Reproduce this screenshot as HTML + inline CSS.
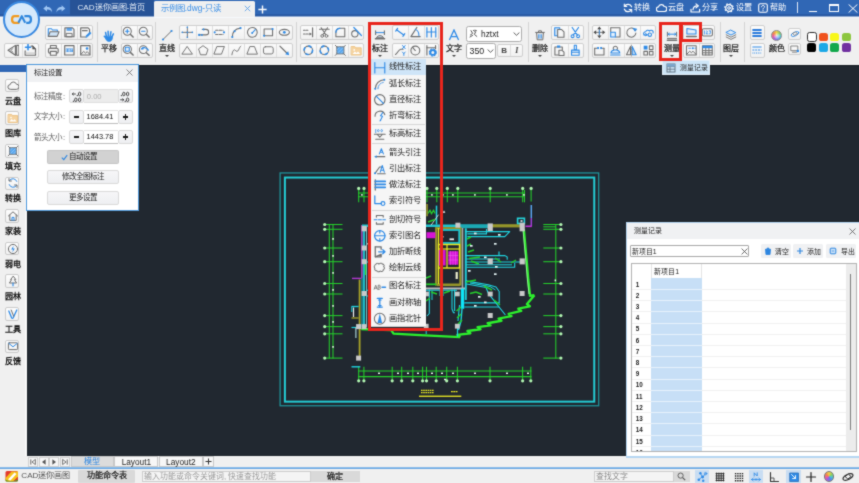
<!DOCTYPE html><html lang="zh-CN"><head><meta charset="utf-8"><title>CAD</title><style>
html,body{margin:0;padding:0}
body{width:859px;height:483px;overflow:hidden;position:relative;background:#212830;font-family:"Liberation Sans",sans-serif;font-size:8px;line-height:10px;color:#2a2a2a}
div{position:absolute;box-sizing:border-box}
svg{display:block}
.t{white-space:nowrap}
.grp{border:1px solid #cfcfcf;border-radius:2px;background:linear-gradient(#fbfbfb,#f1f1f1)}
.dv{background:#dedede;width:1px}
.sep{background:#d4d4d4;width:1px}
.big{font-size:8px;color:#141414;white-space:nowrap;text-align:center;font-weight:500;-webkit-text-stroke:.22px #141414}
.car{width:0;height:0;border-left:2px solid transparent;border-right:2px solid transparent;border-top:2.2px solid #444}
.wt{color:#fff;font-size:8.1px;white-space:nowrap}
.btn{border:1px solid #dadada;border-radius:2px;background:linear-gradient(#f6f6f8,#eeeff2);text-align:center;white-space:nowrap}
.mi{left:0;width:54px;height:16.2px}
.mi .t{left:18.3px;top:3.1px;font-size:8.25px;color:#222}
.sb .t{font-size:8.1px;color:#1a1a1a;width:27px;text-align:center;left:0}
.sbi{border:1px solid #cbcbcb;border-radius:2px;background:linear-gradient(#fdfdfd,#f1f1f1)}
.row{left:0;width:225px;height:11.2px;border-bottom:1px solid #ececec}
.rn{left:2px;top:1px;font-size:6.3px;line-height:9px;color:#1a1a1a;white-space:nowrap;font-weight:bold}
</style></head><body><svg width="0" height="0" style="position:absolute"><filter id="soft" x="0" y="0" width="100%" height="100%" color-interpolation-filters="sRGB"><feConvolveMatrix order="3" kernelMatrix="0.03 0.09 0.03 0.09 0.52 0.09 0.03 0.09 0.03" edgeMode="duplicate"/></filter></svg><div id="w" style="left:0;top:0;width:859px;height:483px;filter:url(#soft)">
<svg width="859" height="483" viewBox="0 0 859 483" style="position:absolute;left:0;top:0" fill="none"><rect x="26.800" y="64.800" width="832.200" height="1" fill="#141a20"/><rect x="280.100" y="172.950" width="318.600" height="232.800" fill="none" stroke="#1f959c" stroke-width="1.250"/><rect x="284.900" y="177.550" width="309.350" height="224.100" fill="none" stroke="#24ccd4" stroke-width="2"/><path d="M358 193L525 193" stroke="#25cf2b" stroke-width="1.05" /><path d="M358 196.8L525 196.8" stroke="#25cf2b" stroke-width="1.05" /><path d="M358.7 188.4L358.7 202.3" stroke="#25cf2b" stroke-width="1.05" /><circle cx="358.7" cy="188.4" r="1.6" fill="#b4f8b4"/><path d="M364 188.4L364 202.3" stroke="#25cf2b" stroke-width="1.05" /><circle cx="364" cy="188.4" r="1.6" fill="#b4f8b4"/><path d="M373.5 188.4L373.5 202.3" stroke="#25cf2b" stroke-width="1.05" /><circle cx="373.5" cy="188.4" r="1.6" fill="#b4f8b4"/><path d="M383 188.4L383 202.3" stroke="#25cf2b" stroke-width="1.05" /><circle cx="383" cy="188.4" r="1.6" fill="#b4f8b4"/><path d="M392.2 188.4L392.2 202.3" stroke="#25cf2b" stroke-width="1.05" /><circle cx="392.2" cy="188.4" r="1.6" fill="#b4f8b4"/><path d="M401.7 188.4L401.7 202.3" stroke="#25cf2b" stroke-width="1.05" /><circle cx="401.7" cy="188.4" r="1.6" fill="#b4f8b4"/><path d="M412.8 188.4L412.8 202.3" stroke="#25cf2b" stroke-width="1.05" /><circle cx="412.8" cy="188.4" r="1.6" fill="#b4f8b4"/><path d="M422.6 188.4L422.6 202.3" stroke="#25cf2b" stroke-width="1.05" /><circle cx="422.6" cy="188.4" r="1.6" fill="#b4f8b4"/><path d="M427 188.4L427 202.3" stroke="#25cf2b" stroke-width="1.05" /><circle cx="427" cy="188.4" r="1.6" fill="#b4f8b4"/><path d="M436.8 188.4L436.8 202.3" stroke="#25cf2b" stroke-width="1.05" /><circle cx="436.8" cy="188.4" r="1.6" fill="#b4f8b4"/><path d="M447.3 188.4L447.3 202.3" stroke="#25cf2b" stroke-width="1.05" /><circle cx="447.3" cy="188.4" r="1.6" fill="#b4f8b4"/><path d="M457.8 188.4L457.8 202.3" stroke="#25cf2b" stroke-width="1.05" /><circle cx="457.8" cy="188.4" r="1.6" fill="#b4f8b4"/><path d="M490.2 188.4L490.2 202.3" stroke="#25cf2b" stroke-width="1.05" /><circle cx="490.2" cy="188.4" r="1.6" fill="#b4f8b4"/><path d="M522.7 188.4L522.7 202.3" stroke="#25cf2b" stroke-width="1.05" /><circle cx="522.7" cy="188.4" r="1.6" fill="#b4f8b4"/><path d="M524.5 190L524.5 202.3" stroke="#25cf2b" stroke-width="1.05" /><path d="M531.1 188.4L531.1 201.5" stroke="#25cf2b" stroke-width="1.05" /><circle cx="531.1" cy="188.4" r="1.6" fill="#b4f8b4"/><rect x="361" y="194.2" width="1.8" height="1.4" fill="#eaffea" /><rect x="372" y="194.2" width="1.8" height="1.4" fill="#eaffea" /><rect x="380" y="194.2" width="1.8" height="1.4" fill="#eaffea" /><rect x="395" y="194.2" width="1.8" height="1.4" fill="#eaffea" /><rect x="408" y="194.2" width="1.8" height="1.4" fill="#eaffea" /><rect x="431" y="194.2" width="1.8" height="1.4" fill="#eaffea" /><rect x="442" y="194.2" width="1.8" height="1.4" fill="#eaffea" /><rect x="452" y="194.2" width="1.8" height="1.4" fill="#eaffea" /><rect x="474" y="194.2" width="1.8" height="1.4" fill="#eaffea" /><rect x="506" y="194.2" width="1.8" height="1.4" fill="#eaffea" /><rect x="523" y="194.2" width="1.8" height="1.4" fill="#eaffea" /><path d="M358 371L531.5 371" stroke="#25cf2b" stroke-width="1.05" /><path d="M358 376.6L531.5 376.6" stroke="#25cf2b" stroke-width="1.05" /><path d="M358.7 366.8L358.7 380.8" stroke="#25cf2b" stroke-width="1.05" /><circle cx="358.7" cy="380.8" r="1.6" fill="#b4f8b4"/><path d="M363.9 366.8L363.9 380.8" stroke="#25cf2b" stroke-width="1.05" /><circle cx="363.9" cy="380.8" r="1.6" fill="#b4f8b4"/><path d="M392.2 366.8L392.2 380.8" stroke="#25cf2b" stroke-width="1.05" /><circle cx="392.2" cy="380.8" r="1.6" fill="#b4f8b4"/><path d="M401.7 366.8L401.7 380.8" stroke="#25cf2b" stroke-width="1.05" /><circle cx="401.7" cy="380.8" r="1.6" fill="#b4f8b4"/><path d="M412.8 366.8L412.8 380.8" stroke="#25cf2b" stroke-width="1.05" /><circle cx="412.8" cy="380.8" r="1.6" fill="#b4f8b4"/><path d="M422.6 366.8L422.6 380.8" stroke="#25cf2b" stroke-width="1.05" /><circle cx="422.6" cy="380.8" r="1.6" fill="#b4f8b4"/><path d="M426.5 366.8L426.5 380.8" stroke="#25cf2b" stroke-width="1.05" /><circle cx="426.5" cy="380.8" r="1.6" fill="#b4f8b4"/><path d="M436.2 366.8L436.2 380.8" stroke="#25cf2b" stroke-width="1.05" /><circle cx="436.2" cy="380.8" r="1.6" fill="#b4f8b4"/><path d="M446.7 366.8L446.7 380.8" stroke="#25cf2b" stroke-width="1.05" /><circle cx="446.7" cy="380.8" r="1.6" fill="#b4f8b4"/><path d="M457.4 366.8L457.4 380.8" stroke="#25cf2b" stroke-width="1.05" /><circle cx="457.4" cy="380.8" r="1.6" fill="#b4f8b4"/><path d="M490 366.8L490 380.8" stroke="#25cf2b" stroke-width="1.05" /><circle cx="490" cy="380.8" r="1.6" fill="#b4f8b4"/><path d="M522.6 366.8L522.6 380.8" stroke="#25cf2b" stroke-width="1.05" /><circle cx="522.6" cy="380.8" r="1.6" fill="#b4f8b4"/><path d="M530.8 366.8L530.8 380.8" stroke="#25cf2b" stroke-width="1.05" /><circle cx="530.8" cy="380.8" r="1.6" fill="#b4f8b4"/><rect x="378" y="372.6" width="2" height="1.4" fill="#eaffea" /><rect x="397" y="372.6" width="2" height="1.4" fill="#eaffea" /><rect x="407" y="372.6" width="2" height="1.4" fill="#eaffea" /><rect x="417" y="372.6" width="2" height="1.4" fill="#eaffea" /><rect x="431" y="372.6" width="2" height="1.4" fill="#eaffea" /><rect x="441" y="372.6" width="2" height="1.4" fill="#eaffea" /><rect x="452" y="372.6" width="2" height="1.4" fill="#eaffea" /><rect x="474" y="372.6" width="2" height="1.4" fill="#eaffea" /><rect x="506" y="372.6" width="2" height="1.4" fill="#eaffea" /><rect x="527" y="372.6" width="2" height="1.4" fill="#eaffea" /><rect x="444" y="378.8" width="2" height="1.4" fill="#eaffea" /><path d="M329.3 224L329.3 358.5" stroke="#25cf2b" stroke-width="1.05" /><path d="M333 224L333 358.5" stroke="#25cf2b" stroke-width="1.05" /><path d="M324.7 224.5L342.5 224.5" stroke="#25cf2b" stroke-width="1.05" /><circle cx="324.7" cy="224.5" r="1.6" fill="#b4f8b4"/><path d="M324.7 229.3L342.5 229.3" stroke="#25cf2b" stroke-width="1.05" /><circle cx="324.7" cy="229.3" r="1.6" fill="#b4f8b4"/><path d="M324.7 248L342.5 248" stroke="#25cf2b" stroke-width="1.05" /><circle cx="324.7" cy="248" r="1.6" fill="#b4f8b4"/><path d="M324.7 261.7L342.5 261.7" stroke="#25cf2b" stroke-width="1.05" /><circle cx="324.7" cy="261.7" r="1.6" fill="#b4f8b4"/><path d="M324.7 283.5L342.5 283.5" stroke="#25cf2b" stroke-width="1.05" /><circle cx="324.7" cy="283.5" r="1.6" fill="#b4f8b4"/><path d="M324.7 294L342.5 294" stroke="#25cf2b" stroke-width="1.05" /><circle cx="324.7" cy="294" r="1.6" fill="#b4f8b4"/><path d="M324.7 315.6L342.5 315.6" stroke="#25cf2b" stroke-width="1.05" /><circle cx="324.7" cy="315.6" r="1.6" fill="#b4f8b4"/><path d="M324.7 326.6L342.5 326.6" stroke="#25cf2b" stroke-width="1.05" /><circle cx="324.7" cy="326.6" r="1.6" fill="#b4f8b4"/><path d="M324.7 333.8L342.5 333.8" stroke="#25cf2b" stroke-width="1.05" /><circle cx="324.7" cy="333.8" r="1.6" fill="#b4f8b4"/><path d="M324.7 358.1L342.5 358.1" stroke="#25cf2b" stroke-width="1.05" /><circle cx="324.7" cy="358.1" r="1.6" fill="#b4f8b4"/><rect x="332.3" y="238" width="1.5" height="1.8" fill="#eaffea" /><rect x="332.3" y="255" width="1.5" height="1.8" fill="#eaffea" /><rect x="332.3" y="272" width="1.5" height="1.8" fill="#eaffea" /><rect x="332.3" y="289" width="1.5" height="1.8" fill="#eaffea" /><rect x="332.3" y="305" width="1.5" height="1.8" fill="#eaffea" /><rect x="332.3" y="321" width="1.5" height="1.8" fill="#eaffea" /><rect x="332.3" y="346" width="1.5" height="1.8" fill="#eaffea" /><path d="M555.8 224L555.8 358.5" stroke="#25cf2b" stroke-width="1.05" /><path d="M543.3 224.5L560.9 224.5" stroke="#25cf2b" stroke-width="1.05" /><circle cx="560.9" cy="224.5" r="1.6" fill="#b4f8b4"/><path d="M543.3 229.3L560.9 229.3" stroke="#25cf2b" stroke-width="1.05" /><circle cx="560.9" cy="229.3" r="1.6" fill="#b4f8b4"/><path d="M543.3 248L560.9 248" stroke="#25cf2b" stroke-width="1.05" /><circle cx="560.9" cy="248" r="1.6" fill="#b4f8b4"/><path d="M543.3 261.7L560.9 261.7" stroke="#25cf2b" stroke-width="1.05" /><circle cx="560.9" cy="261.7" r="1.6" fill="#b4f8b4"/><path d="M543.3 283.5L560.9 283.5" stroke="#25cf2b" stroke-width="1.05" /><circle cx="560.9" cy="283.5" r="1.6" fill="#b4f8b4"/><path d="M543.3 294L560.9 294" stroke="#25cf2b" stroke-width="1.05" /><circle cx="560.9" cy="294" r="1.6" fill="#b4f8b4"/><path d="M543.3 315.6L560.9 315.6" stroke="#25cf2b" stroke-width="1.05" /><circle cx="560.9" cy="315.6" r="1.6" fill="#b4f8b4"/><path d="M543.3 326.6L560.9 326.6" stroke="#25cf2b" stroke-width="1.05" /><circle cx="560.9" cy="326.6" r="1.6" fill="#b4f8b4"/><path d="M543.3 333.8L560.9 333.8" stroke="#25cf2b" stroke-width="1.05" /><circle cx="560.9" cy="333.8" r="1.6" fill="#b4f8b4"/><path d="M543.3 358.1L560.9 358.1" stroke="#25cf2b" stroke-width="1.05" /><circle cx="560.9" cy="358.1" r="1.6" fill="#b4f8b4"/><path d="M543.3 226.8L556 226.8" stroke="#25cf2b" stroke-width="1.05" /><rect x="554.6" y="279.5" width="1.5" height="1.8" fill="#eaffea" /><rect x="419" y="395.6" width="42.3" height="1.3" fill="#ecec22" /><path d="M421 390.400h13M421 392.600h13" stroke="#ecec22" stroke-width="1.200" stroke-dasharray="1.600 .600"/><path d="M451 391.600h7" stroke="#ecec22" stroke-width="1.400" stroke-dasharray="1.800 .500"/><path d="M361.9 225L361.9 278" stroke="#c050d8" stroke-width="1.3" fill="none" stroke-linejoin="round" /><path d="M362 278L362 327" stroke="#1fb8c4" stroke-width="1" fill="none" stroke-linejoin="round" /><path d="M364 230L364 327" stroke="#22b9c4" stroke-width="2.2" /><path d="M366.6 225L366.6 327" stroke="#7fcfd0" stroke-width="1" fill="none" stroke-linejoin="round" /><rect x="367.4" y="243" width="1.6" height="1.6" fill="#f4f4f4" /><path d="M365.5 262L365.5 275" stroke="#25cf2b" stroke-width="1.2" /><path d="M352 278.4L361.4 278.4" stroke="#b038d0" stroke-width="1.4" /><path d="M359.6 279.5L359.6 358.5" stroke="#a8a428" stroke-width="1.8" /><path d="M358.6 306.5L351.5 306.5" stroke="#1fd4e0" stroke-width="1.3" fill="none" stroke-linejoin="round" /><path d="M358.6 318L351.5 318" stroke="#a8a428" stroke-width="1.3" fill="none" stroke-linejoin="round" /><path d="M353.5 307.5L353.5 317" stroke="#f0f0f0" stroke-width="1.2" /><path d="M351.8 306.5L351.8 312" stroke="#1fd4e0" stroke-width="1" /><path d="M351.5 366.8L360.3 366.8" stroke="#1fd4e0" stroke-width="1.4" /><path d="M351.5 327.5L357 327.5" stroke="#1fd4e0" stroke-width="1.2" /><path d="M355.9 327.5L355.9 338" stroke="#bfeff2" stroke-width="1" /><path d="M362 225.8L458 225.8" stroke="#20c4d0" stroke-width="2.6" /><path d="M458 226.2L490 226.2" stroke="#1ba9b4" stroke-width="4" /><path d="M490 225.8L522 225.8" stroke="#97972a" stroke-width="3.2" /><rect x="517.6" y="218.3" width="6.8" height="5.2" fill="none" stroke="#25d3da" stroke-width="1.600"/><rect x="520.5" y="220.2" width="2" height="1.6" fill="#e8ffff" /><path d="M531.3 205L531.3 218" stroke="#5ba6f0" stroke-width="1.5" fill="none" stroke-linejoin="round" /><path d="M531.3 218L531.3 226.3" stroke="#a040d8" stroke-width="1.5" fill="none" stroke-linejoin="round" /><path d="M525.5 226.3L531.8 226.3" stroke="#c030d8" stroke-width="1.6" /><path d="M427.1 204L427.1 216.2" stroke="#97972a" stroke-width="1.6" /><path d="M436.5 205.6L436.5 224.5" stroke="#1fd4e0" stroke-width="1.5" /><path d="M428 213.5L430 210L431.5 214L433.5 210L435 213.5" stroke="#25cf2b" stroke-width="1.2" fill="none" stroke-linejoin="round" /><path d="M431 225.3L438.5 214.7" stroke="#e0e0e0" stroke-width="0.9" fill="none" stroke-linejoin="round" /><path d="M442.600 212.800l1.400-2.400 1.400 2.400z" fill="#f4f4f4"/><path d="M428 222L435 219.5" stroke="#25cf2b" stroke-width="1.4" /><rect x="436.2" y="228.2" width="24.2" height="56.4" fill="none" stroke="#97972a" stroke-width="2.200"/><rect x="441.6" y="230" width="17.6" height="13" fill="none" stroke="#20c4d0" stroke-width="1.800"/><path d="M438.5 228L438.5 284" stroke="#ecec22" stroke-width="1.3" /><rect x="438.5" y="244.5" width="21" height="23.5" fill="none" stroke="#ecec22" stroke-width="1.400"/><path d="M438.5 249L459.5 249" stroke="#ecec22" stroke-width="1.2" /><path d="M447 244.5L447 268" stroke="#ecec22" stroke-width="1.2" /><path d="M438.5 268L438.5 282" stroke="#ecec22" stroke-width="1.2" /><rect x="438.8" y="250" width="6.8" height="15.5" fill="#d614d6" /><rect x="448.4" y="251.2" width="9.8" height="13.5" fill="#d614d6" /><path d="M450.500 251v14M453 251v14M455.500 251v14M448.400 255.500h9.800M448.400 260h9.800" stroke="#f36bf3" stroke-width=".5"/><rect x="426.6" y="232.2" width="8.8" height="6" fill="#d614d6" /><rect x="449.5" y="238.4" width="4.5" height="1.8" fill="#f4f4f4" /><rect x="455.6" y="272" width="2.2" height="7" fill="#f0f0d0" /><rect x="442" y="236" width="1.5" height="1.5" fill="#f4f4f4" /><path d="M462.5 228L462.5 289" stroke="#a8a8a8" stroke-width="1.6" /><path d="M426 288.4L465 288.4" stroke="#bebebe" stroke-width="2" /><path d="M426.2 284.3L436.3 284.3" stroke="#25cf2b" stroke-width="1.8" /><path d="M437 285.5L460 285.5" stroke="#97972a" stroke-width="1.2" /><path d="M465.8 228.3L465.8 300" stroke="#1fc8d4" stroke-width="2" /><path d="M465 231.6L509.7 231.6L504.8 236.6L467.4 236.6" stroke="#1fd4e0" stroke-width="1.1" fill="none" stroke-linejoin="round" /><path d="M467.4 233.9L486.5 233.9L486.5 229" stroke="#1fd4e0" stroke-width="1.1" fill="none" stroke-linejoin="round" /><path d="M465 255.6L505 255.6L507.2 257L507.2 259.8" stroke="#1fd4e0" stroke-width="1.1" fill="none" stroke-linejoin="round" /><path d="M465 262L522.2 262" stroke="#1fd4e0" stroke-width="1.1" fill="none" stroke-linejoin="round" /><path d="M466 259L500 259" stroke="#1fd4e0" stroke-width="1.1" fill="none" stroke-linejoin="round" /><path d="M466.6 267.2L514.7 267.2L514.7 263" stroke="#1fd4e0" stroke-width="1.1" fill="none" stroke-linejoin="round" /><path d="M466 264.8L512 264.8" stroke="#1fd4e0" stroke-width="1" fill="none" stroke-linejoin="round" /><path d="M499 251.5L499 256" stroke="#1fd4e0" stroke-width="1.2" fill="none" stroke-linejoin="round" /><path d="M465.8 280.9L488.3 284.8L496 287L499.2 291.5L499.2 303.4" stroke="#1fd4e0" stroke-width="1.1" fill="none" stroke-linejoin="round" /><path d="M466.5 284L486 287.5L488.3 293.3L505.4 315" stroke="#1fd4e0" stroke-width="1.1" fill="none" stroke-linejoin="round" /><path d="M470 283L490 286.5L495.5 290" stroke="#1fd4e0" stroke-width="1" fill="none" stroke-linejoin="round" /><path d="M464.3 302.9L499.2 302.9" stroke="#1fd4e0" stroke-width="1.1" fill="none" stroke-linejoin="round" /><path d="M464.3 307L499.2 307" stroke="#1fd4e0" stroke-width="1.1" fill="none" stroke-linejoin="round" /><path d="M462.5 288.6L462.5 308.8" stroke="#0fe4f8" stroke-width="3.4" /><path d="M462 308.8L461 321L458.5 330" stroke="#1fd4e0" stroke-width="1.4" fill="none" stroke-linejoin="round" /><path d="M459.5 305L458 321" stroke="#1fd4e0" stroke-width="1.1" fill="none" stroke-linejoin="round" /><path d="M366.5 290.2L457 290.2" stroke="#1fd4e0" stroke-width="1.1" fill="none" stroke-linejoin="round" /><path d="M429.3 289.4L429.3 313.5L427 316" stroke="#1fd4e0" stroke-width="1.1" fill="none" stroke-linejoin="round" /><path d="M432 291L432 300" stroke="#1fd4e0" stroke-width="1" fill="none" stroke-linejoin="round" /><path d="M452 289.4L452 309L453.5 312.7L455 312.7" stroke="#1fd4e0" stroke-width="1.1" fill="none" stroke-linejoin="round" /><path d="M454.6 289.4L454.6 311" stroke="#1fd4e0" stroke-width="1.1" fill="none" stroke-linejoin="round" /><path d="M440 291L440 296L443 296L443 291" stroke="#1fd4e0" stroke-width="1" fill="none" stroke-linejoin="round" /><path d="M366.5 296L370 296L370 312" stroke="#1fd4e0" stroke-width="1.1" fill="none" stroke-linejoin="round" /><path d="M366 262L372 262" stroke="#1fd4e0" stroke-width="1.1" fill="none" stroke-linejoin="round" /><path d="M467 239L471 237" stroke="#25cf2b" stroke-width="1.4" /><path d="M467 246L471 244" stroke="#25cf2b" stroke-width="1.4" /><path d="M468 252L474 250" stroke="#25cf2b" stroke-width="1.4" /><path d="M469 258.5L480 257" stroke="#25cf2b" stroke-width="1.4" /><path d="M471 261L479 264" stroke="#25cf2b" stroke-width="1.4" /><path d="M466 282L476 280" stroke="#25cf2b" stroke-width="1.4" /><path d="M495 258L501 262" stroke="#25cf2b" stroke-width="1.4" /><path d="M511 263L516 260" stroke="#25cf2b" stroke-width="1.4" /><path d="M426 278L431 276" stroke="#25cf2b" stroke-width="1.4" /><path d="M426 301L430 298" stroke="#25cf2b" stroke-width="1.4" /><path d="M470 293.5L476 292" stroke="#25cf2b" stroke-width="1.4" /><path d="M476 292L482 294.5" stroke="#25cf2b" stroke-width="1.4" /><path d="M484 286L492 290" stroke="#25cf2b" stroke-width="1.4" /><path d="M494 300L500 305" stroke="#25cf2b" stroke-width="1.4" /><path d="M456.5 311L461 307" stroke="#25cf2b" stroke-width="1.4" /><path d="M457 318L461 314" stroke="#25cf2b" stroke-width="1.4" /><path d="M458 324L462 320" stroke="#25cf2b" stroke-width="1.4" /><path d="M431 292L437 294" stroke="#25cf2b" stroke-width="1.4" /><path d="M444 293L450 291" stroke="#25cf2b" stroke-width="1.4" /><rect x="494" y="243" width="2.6" height="1.7" fill="#e6f6f6" /><rect x="494" y="273.3" width="2.6" height="1.7" fill="#e6f6f6" /><rect x="474" y="232.6" width="2.6" height="1.7" fill="#e6f6f6" /><rect x="470" y="245" width="2.6" height="1.7" fill="#e6f6f6" /><rect x="484" y="256.5" width="2.6" height="1.7" fill="#e6f6f6" /><rect x="495" y="266" width="2.6" height="1.7" fill="#e6f6f6" /><rect x="478" y="296" width="2.6" height="1.7" fill="#e6f6f6" /><rect x="474" y="305" width="2.6" height="1.7" fill="#e6f6f6" /><rect x="484" y="301.5" width="2.6" height="1.7" fill="#e6f6f6" /><rect x="498" y="234" width="2.6" height="1.7" fill="#e6f6f6" /><rect x="468" y="270" width="2.6" height="1.7" fill="#e6f6f6" /><path d="M523.8 229.1L526.6 260L528.3 280L530 295.8L534.4 295.2" stroke="#2df02d" stroke-width="2.4" fill="none" stroke-linejoin="round" /><path d="M523 230L525.7 260L527.4 280L529 294" stroke="#b8ffb8" stroke-width="0.7" fill="none" stroke-linejoin="round" /><path d="M534.4 295.2L527.0 304.1L529.8 306.3L518.4 308.7L521.2 310.9L508.7 313.9L511.5 316.1L498.6 318.6L501.4 320.8L487.7 323.2L490.5 325.4L477.6 327.1L480.4 329.3L467.5 331.0L470.3 333.2L457.4 334.9L460.2 337.1" stroke="#2df02d" stroke-width="2.4" fill="none" stroke-linejoin="round" stroke-linejoin="miter"/><path d="M460.2 337.1L440 336.2L420 335.2L393.5 333.6L391.2 330.2L375 329.6L361.3 329" stroke="#2df02d" stroke-width="2.3" fill="none" stroke-linejoin="round" /><path d="M457.5 326.6L457.5 336.5" stroke="#1fd4e0" stroke-width="1.2" /><path d="M426.2 328L426.2 334" stroke="#1fd4e0" stroke-width="1" /><rect x="361.7" y="225.9" width="5" height="5.4" fill="#c9c9c9" /><rect x="455.4" y="222.7" width="5" height="5" fill="#c9c9c9" /><rect x="487.6" y="223.4" width="5.2" height="7.6" fill="#c9c9c9" /><rect x="519.6" y="222.7" width="5.2" height="8.6" fill="#c9c9c9" /><rect x="361.7" y="245.5" width="5" height="5" fill="#c9c9c9" /><rect x="487.6" y="258.4" width="5.2" height="6" fill="#c9c9c9" /><rect x="519.6" y="258.4" width="5.2" height="6" fill="#c9c9c9" /><rect x="361.7" y="259.2" width="5" height="5" fill="#c9c9c9" /><rect x="361.6" y="291.0" width="5" height="5" fill="#c9c9c9" /><rect x="424.1" y="291.7" width="4.8" height="4.6" fill="#c9c9c9" /><rect x="454.9" y="291.7" width="4.8" height="4.6" fill="#c9c9c9" /><rect x="487.7" y="291.6" width="5" height="4.8" fill="#c9c9c9" /><rect x="519.6" y="291.0" width="5" height="5" fill="#c9c9c9" /><rect x="487.7" y="313.0" width="5" height="5" fill="#c9c9c9" /><rect x="356.1" y="324.1" width="5" height="5" fill="#c9c9c9" /><rect x="361.6" y="324.1" width="5" height="5" fill="#c9c9c9" /><rect x="423.8" y="323.8" width="4.8" height="4.8" fill="#c9c9c9" /><rect x="454.9" y="323.8" width="4.8" height="4.8" fill="#c9c9c9" /><rect x="356.1" y="355.6" width="5" height="5" fill="#c9c9c9" /></svg>
<div style="left:0px;top:0px;width:867px;height:16.2px;background:linear-gradient(#3067b5 0,#3067b5 13.600px,#2a5ca8 14.400px,#27579f 16.200px)"></div>
<div style="left:70px;top:0px;width:84px;height:16px;background:#275397"></div>
<div style="left:0px;top:16px;width:867px;height:1px;background:#8fa9d0"></div>
<div style="left:0px;top:17px;width:867px;height:1px;background:#f6f8fb"></div>
<div class="t" style="left:77.5px;top:3px;font-size:8.1px;color:#e4ecf7">CAD迷你画图-首页</div>
<div style="left:154px;top:0.6px;width:100.5px;height:16.6px;background:#f0f0f0;border-radius:1.5px 1.5px 0 0"></div>
<div class="t" style="left:160.8px;top:3px;font-size:8.3px;color:#3a8ee6">示例图.dwg-只读</div>
<div style="left:243.5px;top:4.6px;width:7px;height:7px"><svg width="7" height="7" viewBox="0 0 7 7"><path d="M.8.8l5.400 5.400M6.200.8L.8 6.200" stroke="#5a9fe8" stroke-width=".9"/></svg></div>
<div style="left:258px;top:4.800px;width:9px;height:9px"><svg width="9" height="9" viewBox="0 0 9 9"><path d="M4.500.4v8.200M.4 4.500h8.200" stroke="#fff" stroke-width="1.400"/></svg></div>
<div style="left:43px;top:5.2px;width:23px;height:8px"><svg width="23" height="8" viewBox="0 0 23 8"><path d="M4 .2L.3 3.400 4 6.600V4.600c2.600-.2 4.200.6 5 2.800C9.200 4 7.400 2 4 2z" fill="#9ec5f3"/><path d="M18.600.2l3.700 3.200-3.700 3.200V4.600c-2.600-.2-4.200.6-5 2.800C13.400 4 15.200 2 18.600 2z" fill="#9ec5f3"/></svg></div>
<div style="left:623.3px;top:3.2px;width:10px;height:10px"><svg width="10" height="10" viewBox="0 0 10 10" fill="none" stroke="#fff" stroke-width="1" stroke-linecap="round" stroke-linejoin="round"><path d="M8.600 3.800A3.900 3.900 0 001.600 3.300M1.400 6.200A3.900 3.900 0 008.400 6.700" stroke-width="1.250"/><path d="M1.300 1v2.500h2.500M8.700 9V6.500H6.200" stroke-width="1.100"/></svg></div>
<div class="wt" style="left:634px;top:3px;">转换</div>
<div style="left:656.3px;top:3.2px;width:11px;height:10px"><svg width="11" height="10" viewBox="0 0 11 10" fill="none" stroke="#fff" stroke-width="1" stroke-linecap="round" stroke-linejoin="round"><path d="M2.800 8.500A2.300 2.300 0 012.500 3.900 3 3 0 018.200 3.500 2.500 2.500 0 018.500 8.500z" stroke-width="1.200"/></svg></div>
<div class="wt" style="left:668px;top:3px;">云盘</div>
<div style="left:690.3px;top:3.2px;width:11px;height:10px"><svg width="11" height="10" viewBox="0 0 11 10" fill="none" stroke="#fff" stroke-width="1" stroke-linecap="round" stroke-linejoin="round"><path d="M1 6.400v2.600h8.600V6.400" stroke-width="1.200"/><path d="M3 6.600c.3-2.400 1.900-3.700 4.200-3.700" stroke-width="1.200"/><path d="M6 .9l2.400 2-2.400 2" stroke-width="1.200"/></svg></div>
<div class="wt" style="left:702px;top:3px;">分享</div>
<div style="left:724.3px;top:3.2px;width:10px;height:10px"><svg width="10" height="10" viewBox="0 0 10 10" fill="none" stroke="#fff" stroke-width="1" stroke-linecap="round" stroke-linejoin="round"><circle cx="5" cy="5" r="3.300" stroke-width="1.200"/><circle cx="5" cy="5" r="4.200" stroke-width="1.300" stroke-dasharray="1.500 1.800" stroke-linecap="butt"/><circle cx="5" cy="5" r="1.300" stroke-width="1"/></svg></div>
<div class="wt" style="left:735.8px;top:3px;">设置</div>
<div style="left:758.2px;top:3.2px;width:10px;height:10px"><svg width="10" height="10" viewBox="0 0 10 10" fill="none" stroke="#fff" stroke-width="1" stroke-linecap="round" stroke-linejoin="round"><rect x=".7" y=".7" width="8.600" height="8.600" rx="1.600" stroke-width="1.100"/><path d="M3.500 3.800c0-1.900 3-1.900 3 0 0 1.100-1.500 1-1.500 2.300M5 7.500v.3" stroke-width="1"/></svg></div>
<div class="wt" style="left:769.5px;top:3px;">帮助</div>
<div style="left:796.7px;top:2px;width:1px;height:11.4px;background:#dfe8f5"></div>
<div style="left:808.5px;top:10.6px;width:8.5px;height:1px;background:#fff"></div>
<div style="left:828.5px;top:4px;width:10px;height:7.8px;border:1px solid #fff;border-top:2px solid #fff"></div>
<div style="left:848px;top:3.800px;width:10px;height:9px"><svg width="10" height="9" viewBox="0 0 10 9"><path d="M.6.400l8.800 8.200M9.400.400L.6 8.600" stroke="#fff" stroke-width="1"/></svg></div>
<div style="left:0px;top:18px;width:867px;height:46.8px;background:#f0f0f0"></div>
<div style="left:2.500px;top:.800px;width:37px;height:37px;border-radius:50%;background:#d6e9fb;border:2.300px solid #3888e0"></div>
<div style="left:9.700px;top:13.900px;width:23px;height:11px"><svg width="23" height="11" viewBox="0 0 23 11" fill="none" stroke-linecap="butt" stroke-linejoin="round"><path d="M9.200 2.200H4.600c-3.400 0-3.400 6.600 0 6.600h4.800" stroke="#f19a1f" stroke-width="2.300"/><path d="M8.400 8.800L11.800 2.200 15.200 8.800" stroke="#2f86dc" stroke-width="2.100"/><path d="M14.400 2.200h4c3.400 0 3.400 6.600 0 6.600h-2.200" stroke="#2f86dc" stroke-width="2.300"/></svg></div>
<div class="grp" style="left:4.4px;top:43.3px;width:34.6px;height:14.3px;"></div>
<div class="ic" style="left:6.7px;top:44.1px;width:12.7px;height:12.7px"><svg width="12.7" height="12.7" viewBox="0 0 12 12" fill="none" stroke-linecap="round" stroke-linejoin="round" ><path d="M8 1.300L1 6l7 4.700z" stroke="#6e6e6e" stroke-width="1.100"/><path d="M5.600 4.400L3.400 6l2.200 1.600" stroke="#6e6e6e" stroke-width=".7"/><rect x="9.100" y="1.300" width="2.100" height="9.400" stroke="#6e6e6e" stroke-width="1"/></svg></div>
<div class="dv" style="left:21.700000000000003px;top:44.3px;width:1px;height:12.3px;"></div>
<div class="ic" style="left:24.0px;top:44.1px;width:12.7px;height:12.7px"><svg width="12.7" height="12.7" viewBox="0 0 12 12" fill="none" stroke-linecap="round" stroke-linejoin="round" ><path d="M1.100 6.400v4.200h9.800V4.800L8.200 2H6.600" stroke="#6e6e6e" stroke-width="1.100"/><path d="M8.200 2v2.800h2.700z" fill="#555" stroke="#555" stroke-width=".5"/><path d="M1.100 8.600h9.800" stroke="#b5b5b5" stroke-width=".8"/><path d="M3.800 .6v4.800M1.400 3h4.800" stroke="#2e8ae6" stroke-width="1.500"/></svg></div>
<div class="grp" style="left:45.3px;top:25.4px;width:48px;height:14.3px;"></div>
<div class="ic" style="left:46.95px;top:26.2px;width:12.7px;height:12.7px"><svg width="12.7" height="12.7" viewBox="0 0 12 12" fill="none" stroke-linecap="round" stroke-linejoin="round" ><path d="M1.2 9.5V2.6h3l1 1.2h4.6v1.4" stroke="#2e8ae6" stroke-width="1"/><path d="M1.2 9.8l1.8-4.4h8.4l-1.8 4.4z" stroke="#6e6e6e" stroke-width="1" fill="#cfe4f8"/></svg></div>
<div class="dv" style="left:61.3px;top:26.4px;width:1px;height:12.3px;"></div>
<div class="ic" style="left:62.95px;top:26.2px;width:12.7px;height:12.7px"><svg width="12.7" height="12.7" viewBox="0 0 12 12" fill="none" stroke-linecap="round" stroke-linejoin="round" ><path d="M1.8 1.8h7.2l1.4 1.4v7h-8.6z" stroke="#6e6e6e" stroke-width="1.1"/><rect x="3.4" y="1.8" width="5" height="2.8" fill="#2e8ae6" opacity=".75"/><rect x="3.4" y="7" width="5.2" height="3.2" stroke="#6e6e6e" stroke-width=".9"/></svg></div>
<div class="dv" style="left:77.3px;top:26.4px;width:1px;height:12.3px;"></div>
<div class="ic" style="left:78.95px;top:26.2px;width:12.7px;height:12.7px"><svg width="12.7" height="12.7" viewBox="0 0 12 12" fill="none" stroke-linecap="round" stroke-linejoin="round" ><path d="M10 6V3.2L8.6 1.8H1.6v8.6h5" stroke="#6e6e6e" stroke-width="1.1"/><path d="M3.2 4.4h4.6" stroke="#6e6e6e" stroke-width="1"/><path d="M6.6 10.6l.5-1.8 3.2-3.2 1.2 1.2-3.2 3.2z" fill="#2e8ae6" stroke="#2e8ae6" stroke-width=".5"/></svg></div>
<div class="grp" style="left:45.3px;top:43.3px;width:48px;height:14.3px;"></div>
<div class="ic" style="left:46.95px;top:44.1px;width:12.7px;height:12.7px"><svg width="12.7" height="12.7" viewBox="0 0 12 12" fill="none" stroke-linecap="round" stroke-linejoin="round" ><rect x="3.2" y="1.4" width="5.6" height="2.6" stroke="#6e6e6e" stroke-width="1"/><rect x="1.4" y="4" width="9.2" height="4.6" rx="1.3" stroke="#6e6e6e" stroke-width="1.1"/><rect x="3.2" y="7" width="5.6" height="3.6" stroke="#6e6e6e" stroke-width="1" fill="#f4f4f4"/></svg></div>
<div class="dv" style="left:61.3px;top:44.3px;width:1px;height:12.3px;"></div>
<div class="ic" style="left:62.95px;top:44.1px;width:12.7px;height:12.7px"><svg width="12.7" height="12.7" viewBox="0 0 12 12" fill="none" stroke-linecap="round" stroke-linejoin="round" ><rect x="1.6" y="1.6" width="8.8" height="8.8" stroke="#6e6e6e" stroke-width="1.1"/><rect x="2.6" y="4.2" width="6.8" height="3.4" fill="#2e8ae6" opacity=".85"/><path d="M3.4 7v-2M5.4 7v-2h.8v2M7.6 7v-2h1" stroke="#fff" stroke-width=".5"/></svg></div>
<div class="dv" style="left:77.3px;top:44.3px;width:1px;height:12.3px;"></div>
<div class="ic" style="left:78.95px;top:44.1px;width:12.7px;height:12.7px"><svg width="12.7" height="12.7" viewBox="0 0 12 12" fill="none" stroke-linecap="round" stroke-linejoin="round" ><rect x="1.6" y="1.6" width="8.8" height="8.8" stroke="#6e6e6e" stroke-width="1.1"/><circle cx="7.6" cy="4.2" r="1.2" fill="#2e8ae6"/><path d="M2 9.6l2.4-2.6 1.8 1.6 1.6-1.4L10 9.6" stroke="#6e6e6e" stroke-width=".9"/></svg></div>
<div class="sep" style="left:96.8px;top:21.5px;width:1px;height:40px;"></div>
<div class="ic" style="left:103px;top:29.6px;width:12px;height:12px"><svg width="12" height="12" viewBox="0 0 12 12" fill="none" stroke-linecap="round" stroke-linejoin="round" ><path d="M3.300 6.200L2.600 2.600M5.300 5.600L5.100 1.300M7.300 5.800L7.900 1.800M8.900 6.800L10.400 3.800M3.400 8.600L1.300 6.200" stroke="#2e8ae6" stroke-width="1.500"/><path d="M2.800 6.200l6.600.2c.4 2.800-.8 5-3.200 5-2 0-3-1.200-3.600-3z" fill="#2e8ae6" stroke="#2e8ae6" stroke-width=".8"/></svg></div>
<div class="big" style="left:95px;top:43.600px;width:28px;">平移</div>
<div class="grp" style="left:120.6px;top:25.4px;width:32px;height:14.3px;"></div>
<div class="ic" style="left:122.25px;top:26.2px;width:12.7px;height:12.7px"><svg width="12.7" height="12.7" viewBox="0 0 12 12" fill="none" stroke-linecap="round" stroke-linejoin="round" ><circle cx="5" cy="5" r="3.800" stroke="#6e6e6e" stroke-width=".95"/><path d="M7.800 7.800l2.700 2.700" stroke="#6e6e6e" stroke-width="1.400"/><path d="M5 3.400v3.200M3.400 5h3.200" stroke="#2e8ae6" stroke-width="1.100"/></svg></div>
<div class="dv" style="left:136.6px;top:26.4px;width:1px;height:12.3px;"></div>
<div class="ic" style="left:138.25px;top:26.2px;width:12.7px;height:12.7px"><svg width="12.7" height="12.7" viewBox="0 0 12 12" fill="none" stroke-linecap="round" stroke-linejoin="round" ><circle cx="5" cy="5" r="3.800" stroke="#6e6e6e" stroke-width=".95"/><path d="M7.800 7.800l2.700 2.700" stroke="#6e6e6e" stroke-width="1.400"/><path d="M3.400 5h3.200" stroke="#2e8ae6" stroke-width="1.100"/></svg></div>
<div class="grp" style="left:120.6px;top:43.3px;width:32px;height:14.3px;"></div>
<div class="ic" style="left:122.25px;top:44.1px;width:12.7px;height:12.7px"><svg width="12.7" height="12.7" viewBox="0 0 12 12" fill="none" stroke-linecap="round" stroke-linejoin="round" ><circle cx="5" cy="5" r="3.900" stroke="#6e6e6e" stroke-width=".95"/><path d="M7.900 7.900l2.600 2.600" stroke="#6e6e6e" stroke-width="1.400"/><rect x="3.100" y="3.100" width="3.800" height="3.800" rx=".6" stroke="#2e8ae6" stroke-width="1" fill="#e2effb"/></svg></div>
<div class="dv" style="left:136.6px;top:44.3px;width:1px;height:12.3px;"></div>
<div class="ic" style="left:138.25px;top:44.1px;width:12.7px;height:12.7px"><svg width="12.7" height="12.7" viewBox="0 0 12 12" fill="none" stroke-linecap="round" stroke-linejoin="round" ><circle cx="5" cy="5.400" r="3.700" stroke="#6e6e6e" stroke-width=".95"/><path d="M7.800 8.200l2.700 2.500" stroke="#6e6e6e" stroke-width="1.400"/><path d="M3.400 4.400c2-1.600 4.600-1.200 6.400 1.400" stroke="#2e8ae6" stroke-width="1.100"/><path d="M5.200 2.600v2.600H2.600z" fill="#2e8ae6"/></svg></div>
<div class="sep" style="left:155.3px;top:21.5px;width:1px;height:40px;"></div>
<div class="ic" style="left:161.3px;top:29.2px;width:12px;height:12px"><svg width="12" height="12" viewBox="0 0 12 12" fill="none" stroke-linecap="round" stroke-linejoin="round" ><path d="M2 10.500L10.500 2" stroke="#6e6e6e" stroke-width="1"/><circle cx="2" cy="10.500" r="1.100" fill="#2e8ae6"/><circle cx="10.500" cy="2" r="1.100" fill="#2e8ae6"/></svg></div>
<div class="big" style="left:153.3px;top:43.600px;width:28px;">直线</div>
<div class="car" style="left:165.3px;top:54.8px;width:4px;height:3px;"></div>
<div class="grp" style="left:179.4px;top:25.4px;width:113.19000000000001px;height:14.3px;"></div>
<div class="ic" style="left:181.14px;top:26.2px;width:12.7px;height:12.7px"><svg width="12.7" height="12.7" viewBox="0 0 12 12" fill="none" stroke-linecap="round" stroke-linejoin="round" ><path d="M6 1v10M1 6h10" stroke="#6e6e6e" stroke-width=".9"/><circle cx="6" cy="1.300" r=".75" fill="#2e8ae6"/><circle cx="6" cy="10.700" r=".75" fill="#2e8ae6"/><circle cx="1.300" cy="6" r=".75" fill="#2e8ae6"/><circle cx="10.700" cy="6" r=".75" fill="#2e8ae6"/><circle cx="6" cy="6" r=".8" fill="#2e8ae6"/></svg></div>
<div class="dv" style="left:195.57px;top:26.4px;width:1px;height:12.3px;"></div>
<div class="ic" style="left:197.31px;top:26.2px;width:12.7px;height:12.7px"><svg width="12.7" height="12.7" viewBox="0 0 12 12" fill="none" stroke-linecap="round" stroke-linejoin="round" ><path d="M5 3.200h3.400a2.600 2.600 0 010 5.200H2" stroke="#6e6e6e" stroke-width="1"/><path d="M6.800 1.800l-2 1.400 2 1.400z" fill="#2e8ae6"/><circle cx="2" cy="8.400" r="1" fill="#2e8ae6"/><circle cx="4.600" cy="8.400" r=".9" fill="#2e8ae6"/></svg></div>
<div class="dv" style="left:211.74px;top:26.4px;width:1px;height:12.3px;"></div>
<div class="ic" style="left:213.48px;top:26.2px;width:12.7px;height:12.7px"><svg width="12.7" height="12.7" viewBox="0 0 12 12" fill="none" stroke-linecap="round" stroke-linejoin="round" ><path d="M2.500 4h7M2.500 8h7" stroke="#6e6e6e" stroke-width="1" stroke-dasharray="2.200 1.200"/><circle cx="1.600" cy="6" r="1" fill="#2e8ae6"/><circle cx="10.400" cy="6" r="1" fill="#2e8ae6"/></svg></div>
<div class="dv" style="left:227.91000000000003px;top:26.4px;width:1px;height:12.3px;"></div>
<div class="ic" style="left:229.65px;top:26.2px;width:12.7px;height:12.7px"><svg width="12.7" height="12.7" viewBox="0 0 12 12" fill="none" stroke-linecap="round" stroke-linejoin="round" ><path d="M2.200 10.500C2.200 6 5 2.600 10 2" stroke="#6e6e6e" stroke-width="1.1"/><circle cx="2.200" cy="10.400" r="1" fill="#2e8ae6"/><circle cx="10" cy="2" r="1" fill="#2e8ae6"/><circle cx="4.400" cy="5" r="1" fill="#2e8ae6"/></svg></div>
<div class="dv" style="left:244.08px;top:26.4px;width:1px;height:12.3px;"></div>
<div class="ic" style="left:245.82px;top:26.2px;width:12.7px;height:12.7px"><svg width="12.7" height="12.7" viewBox="0 0 12 12" fill="none" stroke-linecap="round" stroke-linejoin="round" ><circle cx="6" cy="6" r="4.600" stroke="#6e6e6e" stroke-width="1"/><path d="M6 6.400l2.800-3" stroke="#2e8ae6" stroke-width="1"/><circle cx="5.800" cy="6.600" r=".9" fill="#2e8ae6"/></svg></div>
<div class="dv" style="left:260.25px;top:26.4px;width:1px;height:12.3px;"></div>
<div class="ic" style="left:261.99px;top:26.2px;width:12.7px;height:12.7px"><svg width="12.7" height="12.7" viewBox="0 0 12 12" fill="none" stroke-linecap="round" stroke-linejoin="round" ><rect x="2" y="2.800" width="8" height="6.400" stroke="#6e6e6e" stroke-width="1"/><circle cx="2" cy="9.200" r="1" fill="#2e8ae6"/><circle cx="10" cy="2.800" r="1" fill="#2e8ae6"/></svg></div>
<div class="dv" style="left:276.42px;top:26.4px;width:1px;height:12.3px;"></div>
<div class="ic" style="left:278.16px;top:26.2px;width:12.7px;height:12.7px"><svg width="12.7" height="12.7" viewBox="0 0 12 12" fill="none" stroke-linecap="round" stroke-linejoin="round" ><ellipse cx="6" cy="6" rx="4.800" ry="2.800" stroke="#6e6e6e" stroke-width="1"/><circle cx="6" cy="6" r="1.300" fill="#2e8ae6"/></svg></div>
<div class="grp" style="left:179.4px;top:43.3px;width:113.19000000000001px;height:14.3px;"></div>
<div class="ic" style="left:181.14px;top:44.1px;width:12.7px;height:12.7px"><svg width="12.7" height="12.7" viewBox="0 0 12 12" fill="none" stroke-linecap="round" stroke-linejoin="round" ><path d="M6 2.600L10.800 9.600H1.200z" stroke="#6e6e6e" stroke-width=".88"/></svg></div>
<div class="dv" style="left:195.57px;top:44.3px;width:1px;height:12.3px;"></div>
<div class="ic" style="left:197.31px;top:44.1px;width:12.7px;height:12.7px"><svg width="12.7" height="12.7" viewBox="0 0 12 12" fill="none" stroke-linecap="round" stroke-linejoin="round" ><path d="M6 1.800l4.400 3.200-1.700 5.200H3.300L1.600 5z" stroke="#6e6e6e" stroke-width=".88"/></svg></div>
<div class="dv" style="left:211.74px;top:44.3px;width:1px;height:12.3px;"></div>
<div class="ic" style="left:213.48px;top:44.1px;width:12.7px;height:12.7px"><svg width="12.7" height="12.7" viewBox="0 0 12 12" fill="none" stroke-linecap="round" stroke-linejoin="round" ><path d="M4 2.400h6.800L8 9.600H1.200z" stroke="#6e6e6e" stroke-width=".88"/></svg></div>
<div class="dv" style="left:227.91000000000003px;top:44.3px;width:1px;height:12.3px;"></div>
<div class="ic" style="left:229.65px;top:44.1px;width:12.7px;height:12.7px"><svg width="12.7" height="12.7" viewBox="0 0 12 12" fill="none" stroke-linecap="round" stroke-linejoin="round" ><path d="M1.800 10.200c.5-3.600 1.900-5.600 3.100-4.300 1.300 1.400 2.300 1.500 3.200-.3.700-1.400 1.100-2.800 2.100-3.600" stroke="#6e6e6e" stroke-width=".88"/></svg></div>
<div class="dv" style="left:244.08px;top:44.3px;width:1px;height:12.3px;"></div>
<div class="ic" style="left:245.82px;top:44.1px;width:12.7px;height:12.7px"><svg width="12.7" height="12.7" viewBox="0 0 12 12" fill="none" stroke-linecap="round" stroke-linejoin="round" ><path d="M4 2.400h4L10.800 9.600H1.200z" stroke="#6e6e6e" stroke-width=".88"/></svg></div>
<div class="dv" style="left:260.25px;top:44.3px;width:1px;height:12.3px;"></div>
<div class="ic" style="left:261.99px;top:44.1px;width:12.7px;height:12.7px"><svg width="12.7" height="12.7" viewBox="0 0 12 12" fill="none" stroke-linecap="round" stroke-linejoin="round" ><rect x="1.400" y="2.600" width="9.200" height="6.800" rx="1.800" stroke="#6e6e6e" stroke-width=".88"/></svg></div>
<div class="dv" style="left:276.42px;top:44.3px;width:1px;height:12.3px;"></div>
<div class="ic" style="left:278.16px;top:44.1px;width:12.7px;height:12.7px"><svg width="12.7" height="12.7" viewBox="0 0 12 12" fill="none" stroke-linecap="round" stroke-linejoin="round" ><path d="M1.800 2l7 7" stroke="#6e6e6e" stroke-width="1.100"/><path d="M10.600 10.600L6.800 9.600l2.800-2.800z" fill="#2e8ae6"/></svg></div>
<div class="sep" style="left:296.3px;top:21.5px;width:1px;height:40px;"></div>
<div class="grp" style="left:300.1px;top:25.4px;width:64.4px;height:14.3px;"></div>
<div class="ic" style="left:301.8px;top:26.2px;width:12.7px;height:12.7px"><svg width="12.7" height="12.7" viewBox="0 0 12 12" fill="none" stroke-linecap="round" stroke-linejoin="round" ><path d="M1.400 4h5M1.400 7.600h6.600" stroke="#6e6e6e" stroke-width="1" stroke-dasharray="1.600 1"/><path d="M10 1.800v8.400" stroke="#6e6e6e" stroke-width="1.100"/><path d="M9.400 7.600L7.200 6.200v2.800z" fill="#6e6e6e"/></svg></div>
<div class="dv" style="left:316.20000000000005px;top:26.4px;width:1px;height:12.3px;"></div>
<div class="ic" style="left:317.9px;top:26.2px;width:12.7px;height:12.7px"><svg width="12.7" height="12.7" viewBox="0 0 12 12" fill="none" stroke-linecap="round" stroke-linejoin="round" ><path d="M3 1.600l4.400 6.600M9 1.600L4.600 8.200M1.400 3h9.200" stroke="#6e6e6e" stroke-width="1"/><circle cx="4" cy="9.400" r="1.300" stroke="#6e6e6e" stroke-width=".9"/><circle cx="8" cy="9.400" r="1.300" stroke="#6e6e6e" stroke-width=".9"/></svg></div>
<div class="dv" style="left:332.3px;top:26.4px;width:1px;height:12.3px;"></div>
<div class="ic" style="left:334.0px;top:26.2px;width:12.7px;height:12.7px"><svg width="12.7" height="12.7" viewBox="0 0 12 12" fill="none" stroke-linecap="round" stroke-linejoin="round" ><path d="M10.200 2.200v8H1.800V6c0-2.200 1.600-3.800 3.800-3.800z" stroke="#6e6e6e" stroke-width="1"/><path d="M1.800 6c0-2.200 1.600-3.800 3.800-3.800" stroke="#2e8ae6" stroke-width="1.200"/></svg></div>
<div class="dv" style="left:348.40000000000003px;top:26.4px;width:1px;height:12.3px;"></div>
<div class="ic" style="left:350.1px;top:26.2px;width:12.7px;height:12.7px"><svg width="12.7" height="12.7" viewBox="0 0 12 12" fill="none" stroke-linecap="round" stroke-linejoin="round" ><circle cx="4.600" cy="7.400" r="3" stroke="#6e6e6e" stroke-width="1"/><path d="M3.600 1.400l7.200 7.600" stroke="#2e8ae6" stroke-width="1.100"/></svg></div>
<div class="grp" style="left:300.1px;top:43.3px;width:64.4px;height:14.3px;"></div>
<div class="ic" style="left:301.8px;top:44.1px;width:12.7px;height:12.7px"><svg width="12.7" height="12.7" viewBox="0 0 12 12" fill="none" stroke-linecap="round" stroke-linejoin="round" ><circle cx="6" cy="6" r="4" stroke="#6e6e6e" stroke-width="1"/><circle cx="6" cy="6" r="4" stroke="#2e8ae6" stroke-width="1.500" stroke-dasharray="2.200 4.083"/></svg></div>
<div class="dv" style="left:316.20000000000005px;top:44.3px;width:1px;height:12.3px;"></div>
<div class="ic" style="left:317.9px;top:44.1px;width:12.7px;height:12.7px"><svg width="12.7" height="12.7" viewBox="0 0 12 12" fill="none" stroke-linecap="round" stroke-linejoin="round" ><circle cx="6" cy="6" r="4" stroke="#6e6e6e" stroke-width="1"/><circle cx="6" cy="6" r="4" stroke="#2e8ae6" stroke-width="1.500" stroke-dasharray="2.200 4.083" stroke-dashoffset="3.100"/></svg></div>
<div class="dv" style="left:332.3px;top:44.3px;width:1px;height:12.3px;"></div>
<div class="ic" style="left:334.0px;top:44.1px;width:12.7px;height:12.7px"><svg width="12.7" height="12.7" viewBox="0 0 12 12" fill="none" stroke-linecap="round" stroke-linejoin="round" ><rect x="2.600" y="2.600" width="6.800" height="6.800" fill="#5aa8f0"/><path d="M2.600 6l3.400-3.400M2.600 9.400l6.800-6.800M6 9.400l3.400-3.400" stroke="#9ccbf6" stroke-width=".7"/><path d="M1.200 1.200l1.600 1.600M10.800 1.200l-1.600 1.600M1.200 10.800l1.600-1.600M10.800 10.800l-1.600-1.600" stroke="#6e6e6e" stroke-width=".9"/><path d="M2.600 2.600h6.800v6.800H2.600z" stroke="#6e6e6e" stroke-width=".8" stroke-dasharray="1.500 .8"/></svg></div>
<div class="dv" style="left:348.40000000000003px;top:44.3px;width:1px;height:12.3px;"></div>
<div class="ic" style="left:350.1px;top:44.1px;width:12.7px;height:12.7px"><svg width="12.7" height="12.7" viewBox="0 0 12 12" fill="none" stroke-linecap="round" stroke-linejoin="round" ><path d="M1.400 2.400h3.200l1 1.200h5v6.800H1.400z" fill="#f5d3a0" stroke="#ecc07e" stroke-width=".8"/><path d="M2.400 9.400l2.200-2.400 1.600 1.400 1.400-1.200 2 2.200z" fill="#fff"/><circle cx="4" cy="5.600" r=".8" fill="#fff"/></svg></div>
<div class="ic" style="left:374px;top:29.2px;width:12px;height:12px"><svg width="12" height="12" viewBox="0 0 12 12" fill="none" stroke-linecap="round" stroke-linejoin="round" ><path d="M1.600 1.800v3.600M10.400 1.800v3.600" stroke="#6e6e6e" stroke-width="1.100"/><path d="M2.200 3.600h7.600" stroke="#2e8ae6" stroke-width="1"/><path d="M2.600 8.400c1-2.400 5.800-2.400 6.800 0z" stroke="#6e6e6e" stroke-width="1" fill="#cfe4f8"/><path d="M1.400 9.800h9.200" stroke="#6e6e6e" stroke-width="1.400"/></svg></div>
<div class="big" style="left:366px;top:43.600px;width:28px;">标注</div>
<div class="car" style="left:378px;top:54.8px;width:4px;height:3px;"></div>
<div class="grp" style="left:392.4px;top:25.4px;width:46.8px;height:14.3px;"></div>
<div class="ic" style="left:393.85px;top:26.2px;width:12.7px;height:12.7px"><svg width="12.7" height="12.7" viewBox="0 0 12 12" fill="none" stroke-linecap="round" stroke-linejoin="round" ><path d="M2.400 3.600l6.800 5" stroke="#2e8ae6" stroke-width="1.100"/><path d="M1.600 4.800l1.800-2.600M8.400 9.800l1.800-2.600" stroke="#2e8ae6" stroke-width="1.100"/></svg></div>
<div class="dv" style="left:408.0px;top:26.4px;width:1px;height:12.3px;"></div>
<div class="ic" style="left:409.45px;top:26.2px;width:12.7px;height:12.7px"><svg width="12.7" height="12.7" viewBox="0 0 12 12" fill="none" stroke-linecap="round" stroke-linejoin="round" ><path d="M7.400 1.400L1.800 10h8.800" stroke="#6e6e6e" stroke-width="1.100"/><path d="M6 3.200c2 .8 3.400 3 3.400 5.800" stroke="#2e8ae6" stroke-width="1"/></svg></div>
<div class="dv" style="left:423.59999999999997px;top:26.4px;width:1px;height:12.3px;"></div>
<div class="ic" style="left:425.05px;top:26.2px;width:12.7px;height:12.7px"><svg width="12.7" height="12.7" viewBox="0 0 12 12" fill="none" stroke-linecap="round" stroke-linejoin="round" ><path d="M1.800 1.600v8.800M6 1.600v8.800M10.200 1.600v8.800" stroke="#2e8ae6" stroke-width="1.100"/><path d="M1.800 5.600h8.400" stroke="#2e8ae6" stroke-width="1"/></svg></div>
<div class="grp" style="left:392.4px;top:43.3px;width:46.8px;height:14.3px;"></div>
<div class="ic" style="left:393.85px;top:44.1px;width:12.7px;height:12.7px"><svg width="12.7" height="12.7" viewBox="0 0 12 12" fill="none" stroke-linecap="round" stroke-linejoin="round" ><path d="M1.400 10c2-1 2.600-4.600 5-5h2.200" stroke="#6e6e6e" stroke-width="1"/><path d="M8 1.400l2.600 3M10.600 1.400L8 4.400M8 7.600l1.300 1.500 1.300-1.500M9.300 9.100v1.700" stroke="#2e8ae6" stroke-width=".9"/></svg></div>
<div class="dv" style="left:408.0px;top:44.3px;width:1px;height:12.3px;"></div>
<div class="ic" style="left:409.45px;top:44.1px;width:12.7px;height:12.7px"><svg width="12.7" height="12.7" viewBox="0 0 12 12" fill="none" stroke-linecap="round" stroke-linejoin="round" ><circle cx="6" cy="6.200" r="4.200" stroke="#6e6e6e" stroke-width="1"/><path d="M6 6.200L3.400 3.200" stroke="#6e6e6e" stroke-width="1"/><path d="M2.800 2.500l1.600.4-1.100 1z" fill="#6e6e6e"/></svg></div>
<div class="dv" style="left:423.59999999999997px;top:44.3px;width:1px;height:12.3px;"></div>
<div class="ic" style="left:425.05px;top:44.1px;width:12.7px;height:12.7px"><svg width="12.7" height="12.7" viewBox="0 0 12 12" fill="none" stroke-linecap="round" stroke-linejoin="round" ><path d="M1.800 1.600v8.800M10 1.600v3" stroke="#6e6e6e" stroke-width="1.100"/><path d="M1.800 3.600h8" stroke="#6e6e6e" stroke-width="1"/><circle cx="7.400" cy="8" r="2.300" stroke="#2e8ae6" stroke-width="1.700"/><circle cx="7.400" cy="8" r="3.300" stroke="#2e8ae6" stroke-width="1" stroke-dasharray="1.200 1.400"/></svg></div>
<div class="ic" style="left:447.6px;top:29.2px;width:12px;height:12px"><svg width="12" height="12" viewBox="0 0 12 12" fill="none" stroke-linecap="round" stroke-linejoin="round" ><path d="M1.400 11L6 1l4.600 10M3 7.600h6" stroke="#2e8ae6" stroke-width="1.300" stroke-linecap="butt" stroke-linejoin="miter"/></svg></div>
<div class="big" style="left:439.6px;top:43.600px;width:28px;">文字</div>
<div class="car" style="left:451.6px;top:54.8px;width:4px;height:3px;"></div>
<div style="left:466.2px;top:26.1px;width:56.2px;height:15.7px;background:#fff;border:1px solid #adadad;border-radius:2.500px"></div>
<div style="left:469px;top:29px;width:9px;height:9px"><svg width="9" height="9" viewBox="0 0 9 9" fill="none" stroke="#444" stroke-width=".9" stroke-linecap="round"><path d="M2 1.600l1.600 2.800L1.400 6M4.400 1.400l2.200 1.400-1.200 2.600 2.400 2M1 8l2.600-1.600M6 1.200l1.400.4"/></svg></div>
<div class="t" style="left:481px;top:28.6px;font-size:8.400px;color:#222">hztxt</div>
<div style="left:512.500px;top:32px;width:7px;height:4px"><svg width="7" height="4" viewBox="0 0 7 4"><path d="M.600.500L3.500 3.300 6.400.500" stroke="#4a4a4a" stroke-width=".9" fill="none"/></svg></div>
<div style="left:466.2px;top:43.1px;width:29.8px;height:16px;background:#fff;border:1px solid #adadad;border-radius:2.500px"></div>
<div class="t" style="left:469.5px;top:46px;font-size:8.800px;color:#222">350</div>
<div style="left:487px;top:49.200px;width:7px;height:4px"><svg width="7" height="4" viewBox="0 0 7 4"><path d="M.600.500L3.500 3.300 6.400.500" stroke="#4a4a4a" stroke-width=".9" fill="none"/></svg></div>
<div class="grp" style="left:497.4px;top:43.8px;width:25.8px;height:13.2px;"></div>
<div class="dv" style="left:510.3px;top:44.8px;width:1px;height:11.2px;"></div>
<div class="t" style="left:501.3px;top:45.6px;font-size:8px;font-weight:bold;color:#444">B</div>
<div class="t" style="left:515.3px;top:45.6px;font-size:8px;font-weight:bold;font-style:italic;color:#444;font-family:'Liberation Serif',serif">I</div>
<div class="sep" style="left:527.6px;top:21.5px;width:1px;height:40px;"></div>
<div class="ic" style="left:534px;top:29.2px;width:12px;height:12px"><svg width="12" height="12" viewBox="0 0 12 12" fill="none" stroke-linecap="round" stroke-linejoin="round" ><path d="M2.600 4l.6 6.800h5.600L9.400 4z" stroke="#6e6e6e" stroke-width="1"/><path d="M1.600 3.400h8.800M4.600 3.200V1.800h2.800v1.400" stroke="#6e6e6e" stroke-width="1"/><path d="M4.600 5.600v3.600M6 5.600v3.600M7.400 5.600v3.600" stroke="#2e8ae6" stroke-width=".8"/></svg></div>
<div class="big" style="left:526px;top:43.600px;width:28px;">删除</div>
<div class="car" style="left:538px;top:54.8px;width:4px;height:3px;"></div>
<div class="grp" style="left:551.4px;top:25.4px;width:32.2px;height:14.3px;"></div>
<div class="ic" style="left:553.1px;top:26.2px;width:12.7px;height:12.7px"><svg width="12.7" height="12.7" viewBox="0 0 12 12" fill="none" stroke-linecap="round" stroke-linejoin="round" ><path d="M1.600 1.600h4.800v7.600H1.600z" stroke="#2e8ae6" stroke-width="1" fill="#cfe4f8"/><path d="M4.400 3.400h3.800l2.200 2.200v5H4.400z" stroke="#6e6e6e" stroke-width="1" fill="#f6f6f6"/></svg></div>
<div class="dv" style="left:567.5px;top:26.4px;width:1px;height:12.3px;"></div>
<div class="ic" style="left:569.2px;top:26.2px;width:12.7px;height:12.7px"><svg width="12.7" height="12.7" viewBox="0 0 12 12" fill="none" stroke-linecap="round" stroke-linejoin="round" ><path d="M3 1.400l5 7.200M9 1.400L4 8.600" stroke="#2e8ae6" stroke-width="1.100"/><circle cx="3.400" cy="9.600" r="1.400" stroke="#2e8ae6" stroke-width="1"/><circle cx="8.600" cy="9.600" r="1.400" stroke="#2e8ae6" stroke-width="1"/></svg></div>
<div class="grp" style="left:551.4px;top:43.3px;width:32.2px;height:14.3px;"></div>
<div class="ic" style="left:553.1px;top:44.1px;width:12.7px;height:12.7px"><svg width="12.7" height="12.7" viewBox="0 0 12 12" fill="none" stroke-linecap="round" stroke-linejoin="round" ><path d="M5 10.400H1.800V2.800h7v2.400" stroke="#6e6e6e" stroke-width="1"/><rect x="3.800" y="1.400" width="3" height="2" fill="#2e8ae6"/><path d="M5.600 6h3l1.800 1.800v3H5.600z" stroke="#6e6e6e" stroke-width="1" fill="#f6f6f6"/></svg></div>
<div class="dv" style="left:567.5px;top:44.3px;width:1px;height:12.3px;"></div>
<div class="ic" style="left:569.2px;top:44.1px;width:12.7px;height:12.7px"><svg width="12.7" height="12.7" viewBox="0 0 12 12" fill="none" stroke-linecap="round" stroke-linejoin="round" ><rect x="5" y="1.200" width="2" height="4.200" stroke="#2e8ae6" stroke-width="1"/><path d="M2.400 5.800h7.200v2H2.400z" stroke="#2e8ae6" stroke-width="1" fill="#e6f1fc"/><path d="M2.400 7.800v2.800h7.200V7.800" stroke="#2e8ae6" stroke-width="1"/></svg></div>
<div class="sep" style="left:588px;top:21.5px;width:1px;height:40px;"></div>
<div class="grp" style="left:591.5px;top:25.4px;width:64.48px;height:14.3px;"></div>
<div class="ic" style="left:593.21px;top:26.2px;width:12.7px;height:12.7px"><svg width="12.7" height="12.7" viewBox="0 0 12 12" fill="none" stroke-linecap="round" stroke-linejoin="round" ><path d="M6 2v8M2 6h8" stroke="#6e6e6e" stroke-width=".9"/><path d="M6 4v4" stroke="#2e8ae6" stroke-width=".8"/><path d="M6 .4L4 3h4zM6 11.600L4 9h4zM.4 6L3 4v4zM11.600 6L9 4v4z" fill="#4a4a4a"/></svg></div>
<div class="dv" style="left:607.62px;top:26.4px;width:1px;height:12.3px;"></div>
<div class="ic" style="left:609.33px;top:26.2px;width:12.7px;height:12.7px"><svg width="12.7" height="12.7" viewBox="0 0 12 12" fill="none" stroke-linecap="round" stroke-linejoin="round" ><path d="M2 1.600h8.400v8.800H6.400" stroke="#6e6e6e" stroke-width="1"/><path d="M1.600 1.600v3.800" stroke="#6e6e6e" stroke-width="1"/><rect x="1.600" y="6" width="4.400" height="4.400" stroke="#2e8ae6" stroke-width="1" fill="#e6f1fc"/></svg></div>
<div class="dv" style="left:623.74px;top:26.4px;width:1px;height:12.3px;"></div>
<div class="ic" style="left:625.45px;top:26.2px;width:12.7px;height:12.7px"><svg width="12.7" height="12.7" viewBox="0 0 12 12" fill="none" stroke-linecap="round" stroke-linejoin="round" ><path d="M9.800 4.200A4.300 4.300 0 1010.300 6.600" stroke="#6e6e6e" stroke-width="1"/><path d="M10.900 2.800L7.600 2.200l1.800 2.600z" fill="#2e8ae6" stroke="#2e8ae6" stroke-width=".6"/></svg></div>
<div class="dv" style="left:639.86px;top:26.4px;width:1px;height:12.3px;"></div>
<div class="ic" style="left:641.57px;top:26.2px;width:12.7px;height:12.7px"><svg width="12.7" height="12.7" viewBox="0 0 12 12" fill="none" stroke-linecap="round" stroke-linejoin="round" ><path d="M2 8.600c-1.200-1.600 0-3.400 1.600-3.200.4-1.600 2.600-1.800 3.400-.6 1.600-1.800 4.200-.2 3.400 1.800M2 8.600h3" stroke="#2e8ae6" stroke-width="1"/><circle cx="7.400" cy="8.200" r="1.600" stroke="#2e8ae6" stroke-width="1"/><circle cx="3.600" cy="8.200" r="1" stroke="#2e8ae6" stroke-width=".9"/></svg></div>
<div class="grp" style="left:591.5px;top:43.3px;width:64.48px;height:14.3px;"></div>
<div class="ic" style="left:593.21px;top:44.1px;width:12.7px;height:12.7px"><svg width="12.7" height="12.7" viewBox="0 0 12 12" fill="none" stroke-linecap="round" stroke-linejoin="round" ><path d="M1.600 4v6.400h8.800V4" stroke="#6e6e6e" stroke-width="1"/><path d="M1.600 4h2.200M8.200 4h2.200" stroke="#6e6e6e" stroke-width="1"/><rect x="4" y="2.800" width="1.600" height="2" fill="#2e8ae6"/><rect x="6.800" y="2.800" width="1.600" height="2" fill="#2e8ae6"/></svg></div>
<div class="dv" style="left:607.62px;top:44.3px;width:1px;height:12.3px;"></div>
<div class="ic" style="left:609.33px;top:44.1px;width:12.7px;height:12.7px"><svg width="12.7" height="12.7" viewBox="0 0 12 12" fill="none" stroke-linecap="round" stroke-linejoin="round" ><path d="M4.600 5.600c-1.200-1.200-.6-3.400 1.400-3.400s2.600 2.200 1.400 3.400" stroke="#6e6e6e" stroke-width="1"/><path d="M1.800 8.600c0-1.600 1.400-2.600 3-3h2.400c1.600.4 3 1.400 3 3z" stroke="#2e8ae6" stroke-width="1" fill="#e6f1fc"/><path d="M1.600 10.400h8.800" stroke="#2e8ae6" stroke-width="1.100"/></svg></div>
<div class="dv" style="left:623.74px;top:44.3px;width:1px;height:12.3px;"></div>
<div class="ic" style="left:625.45px;top:44.1px;width:12.7px;height:12.7px"><svg width="12.7" height="12.7" viewBox="0 0 12 12" fill="none" stroke-linecap="round" stroke-linejoin="round" ><path d="M5.200 2.400v7.800H1.400z" stroke="#6e6e6e" stroke-width="1"/><path d="M6.800 2.400v7.800h3.800z" stroke="#2e8ae6" stroke-width="1" fill="#2e8ae6" fill-opacity=".28"/><path d="M6 1v10.400" stroke="#6e6e6e" stroke-width=".7" stroke-dasharray="1 1"/></svg></div>
<div class="dv" style="left:639.86px;top:44.3px;width:1px;height:12.3px;"></div>
<div class="ic" style="left:641.57px;top:44.1px;width:12.7px;height:12.7px"><svg width="12.7" height="12.7" viewBox="0 0 12 12" fill="none" stroke-linecap="round" stroke-linejoin="round" ><rect x="1.600" y="1.600" width="3.600" height="3.600" fill="#2e8ae6"/><rect x="7" y="1.800" width="3.400" height="3.400" stroke="#6e6e6e" stroke-width="1"/><rect x="1.800" y="7" width="3.400" height="3.400" stroke="#6e6e6e" stroke-width="1"/><rect x="7" y="7" width="3.400" height="3.400" stroke="#6e6e6e" stroke-width="1"/></svg></div>
<div class="ic" style="left:665.5px;top:29.5px;width:12px;height:12px"><svg width="12" height="12" viewBox="0 0 12 12" fill="none" stroke-linecap="round" stroke-linejoin="round" ><path d="M1.400 2.200v4M10.600 2.200v4" stroke="#6e6e6e" stroke-width="1"/><path d="M2 4.200h8" stroke="#2e8ae6" stroke-width="1"/><path d="M3.400 3.200L2 4.200l1.400 1M8.600 3.200l1.400 1-1.400 1" stroke="#2e8ae6" stroke-width=".8"/><path d="M1.400 8.400h9.200" stroke="#6e6e6e" stroke-width="1"/><path d="M1.400 10.200h9.200" stroke="#6e6e6e" stroke-width="1.600"/></svg></div>
<div class="big" style="left:657.5px;top:43.600px;width:28px;">测量</div>
<div class="car" style="left:669.5px;top:54.8px;width:4px;height:3px;"></div>
<div class="grp" style="left:683.2px;top:25.4px;width:31.8px;height:14.3px;"></div>
<div class="ic" style="left:684.8px;top:26.2px;width:12.7px;height:12.7px"><svg width="12.7" height="12.7" viewBox="0 0 12 12" fill="none" stroke-linecap="round" stroke-linejoin="round" ><path d="M1.800 2.400l8.600 1.400v3.800H1.800z" stroke="#2e8ae6" stroke-width="1" fill="#e3effb"/><path d="M1.600 10h9" stroke="#6e6e6e" stroke-width="1.500"/></svg></div>
<div class="dv" style="left:699.1px;top:26.4px;width:1px;height:12.3px;"></div>
<div class="ic" style="left:700.7px;top:26.2px;width:12.7px;height:12.7px"><svg width="12.7" height="12.7" viewBox="0 0 12 12" fill="none" stroke-linecap="round" stroke-linejoin="round" ><rect x="1.200" y="2.600" width="9.600" height="6.800" rx="1.400" stroke="#6e6e6e" stroke-width="1"/><path d="M3.200 7.600V4.600M4.800 5c.6-.8 1.800-.2 1 .8l-1 1.600h1.600M7.800 4.600h1.400l-.8 1.200c1.200 0 1.200 1.800-.6 1.600" stroke="#2e8ae6" stroke-width=".8"/></svg></div>
<div class="grp" style="left:683.2px;top:43.3px;width:31.8px;height:14.3px;"></div>
<div class="ic" style="left:684.8px;top:44.1px;width:12.7px;height:12.7px"><svg width="12.7" height="12.7" viewBox="0 0 12 12" fill="none" stroke-linecap="round" stroke-linejoin="round" ><rect x="1.400" y="1.600" width="9.200" height="8.800" stroke="#6e6e6e" stroke-width="1"/><circle cx="7.400" cy="4" r="1" fill="#2e8ae6"/><path d="M5.400 4h-2M9.400 4h.6" stroke="#2e8ae6" stroke-width=".8"/><path d="M1.800 9.600l2.600-2.800L6 8.200l1.600-1.400 2.600 2.800" stroke="#6e6e6e" stroke-width=".9"/></svg></div>
<div class="dv" style="left:699.1px;top:44.3px;width:1px;height:12.3px;"></div>
<div class="ic" style="left:700.7px;top:44.1px;width:12.7px;height:12.7px"><svg width="12.7" height="12.7" viewBox="0 0 12 12" fill="none" stroke-linecap="round" stroke-linejoin="round" ><rect x="1.400" y="1.600" width="9.200" height="8.800" stroke="#6e6e6e" stroke-width="1"/><rect x="1.400" y="1.600" width="9.200" height="2.400" fill="#2e8ae6"/><path d="M1.400 6.200h9.200M1.400 8.300h9.200M4.500 4v6.400M7.500 4v6.400" stroke="#6e6e6e" stroke-width=".9"/></svg></div>
<div class="sep" style="left:719.7px;top:21.5px;width:1px;height:40px;"></div>
<div class="ic" style="left:725.2px;top:29.3px;width:12px;height:12px"><svg width="12" height="12" viewBox="0 0 12 12" fill="none" stroke-linecap="round" stroke-linejoin="round" ><path d="M6 1.200l4.800 2.400L6 6 1.200 3.600z" stroke="#2e8ae6" stroke-width=".95" fill="#dcebfa"/><path d="M1.200 5.800L6 8.200l4.800-2.400M1.200 8L6 10.400 10.800 8" stroke="#6e6e6e" stroke-width=".9"/></svg></div>
<div class="big" style="left:717.2px;top:43.600px;width:28px;">图层</div>
<div class="car" style="left:729.2px;top:54.8px;width:4px;height:3px;"></div>
<div class="sep" style="left:743.7px;top:21.5px;width:1px;height:40px;"></div>
<div class="grp" style="left:749.5px;top:25.2px;width:15.2px;height:14.6px;"></div>
<div class="ic" style="left:751.1px;top:26.5px;width:12px;height:12px"><svg width="12" height="12" viewBox="0 0 12 12" fill="none" stroke-linecap="round" stroke-linejoin="round" ><path d="M1.400 3h9.200M1.400 6h9.200M1.400 9h9.200" stroke="#2c7cdc" stroke-width="1.800" stroke-linecap="butt"/></svg></div>
<div class="grp" style="left:749.5px;top:43px;width:15.2px;height:14.6px;"></div>
<div class="ic" style="left:751.1px;top:44.3px;width:12px;height:12px"><svg width="12" height="12" viewBox="0 0 12 12" fill="none" stroke-linecap="round" stroke-linejoin="round" ><path d="M1.400 3h9.200" stroke="#2e8ae6" stroke-width="1" stroke-linecap="butt"/><path d="M1.400 6h9.200" stroke="#2e8ae6" stroke-width="1" stroke-dasharray="2 .8" stroke-linecap="butt"/><path d="M1.400 9h9.200" stroke="#2e8ae6" stroke-width="1" stroke-dasharray="1 .8" stroke-linecap="butt"/></svg></div>
<div style="left:771px;top:30.200px;width:11px;height:11px;border-radius:50%;background:conic-gradient(#f2d04a,#8fd05a,#49c2d8,#5a86e8,#a35fe0,#ee5f9f,#f2894a,#f2d04a);border:.600px solid #8a8a8a"></div>
<div style="left:773.500px;top:32.700px;width:6px;height:6px;border-radius:50%;background:radial-gradient(rgba(255,255,255,.75),rgba(255,255,255,0))"></div>
<div class="big" style="left:762.500px;top:43.600px;width:28px">颜色</div>
<div class="grp" style="left:788.3px;top:28.2px;width:12.4px;height:11.6px;"></div>
<div class="ic" style="left:789.5px;top:29px;width:10px;height:10px"><svg width="10" height="10" viewBox="0 0 12 12" fill="none" stroke-linecap="round" stroke-linejoin="round" ><ellipse cx="6" cy="6" rx="5" ry="2.200" transform="rotate(-25 6 6)" stroke="#2e8ae6" stroke-width="1"/><path d="M3.400 5.200l3-1.600 2.600 1.800-3 2z" stroke="#6e6e6e" stroke-width=".9" fill="#f4f4f4"/></svg></div>
<div class="grp" style="left:788.3px;top:43px;width:12.4px;height:11.6px;"></div>
<div class="ic" style="left:789.5px;top:43.8px;width:10px;height:10px"><svg width="10" height="10" viewBox="0 0 12 12" fill="none" stroke-linecap="round" stroke-linejoin="round" ><rect x="1.400" y="2.400" width="8" height="5.600" stroke="#6e6e6e" stroke-width="1"/><path d="M3 9.800h4.800" stroke="#6e6e6e" stroke-width="1"/><circle cx="9.400" cy="8.400" r="1.500" fill="#2e8ae6"/></svg></div>
<div style="left:806.6999999999999px;top:32.0px;width:9.9px;height:9.7px;background:#ffffff;border-radius:2.600px;border:1.200px solid #2a2a2a;"></div>
<div style="left:818.8499999999999px;top:32.6px;width:8.7px;height:8.5px;background:#f0511c;border-radius:2.600px;"></div>
<div style="left:830.4px;top:32.6px;width:8.7px;height:8.5px;background:#f8f71a;border-radius:2.600px;"></div>
<div style="left:841.9499999999999px;top:32.6px;width:8.7px;height:8.5px;background:#8cc63e;border-radius:2.600px;"></div>
<div style="left:807.3px;top:43.4px;width:8.7px;height:8.5px;background:#000000;border-radius:2.600px;"></div>
<div style="left:818.8499999999999px;top:43.4px;width:8.7px;height:8.5px;background:#1ca8e6;border-radius:2.600px;"></div>
<div style="left:830.4px;top:43.4px;width:8.7px;height:8.5px;background:#12a84c;border-radius:2.600px;"></div>
<div style="left:841.9499999999999px;top:43.4px;width:8.7px;height:8.5px;background:#7030a0;border-radius:2.600px;"></div>
<div class="sb" style="left:0px;top:63.8px;width:26.8px;height:404px;background:#f0f0f0"></div>
<div style="left:24.6px;top:63.8px;width:2.2px;height:392px;background:#f8f8f8"></div>
<div style="left:0px;top:65px;width:26.4px;height:7px;background:#3067b5"></div>
<div class="sbi" style="left:5.2px;top:78.8px;width:14.2px;height:13.6px;"></div>
<div class="ic" style="left:6.500px;top:79.50px;width:12px;height:12px"><svg width="12" height="12" viewBox="0 0 12 12" fill="none" stroke-linecap="round" stroke-linejoin="round" ><path d="M3.400 9.400A2.400 2.400 0 013.200 4.600 3.200 3.200 0 019.400 4.200 2.600 2.600 0 019.600 9.400z" stroke="#6e6e6e" stroke-width="1"/></svg></div>
<div class="t" style="left:0;top:96.60px;width:25px;text-align:center;font-size:8.100px;color:#111;font-weight:700">云盘</div>
<div class="sbi" style="left:5.2px;top:111.4px;width:14.2px;height:13.6px;"></div>
<div class="ic" style="left:6.500px;top:112.10px;width:12px;height:12px"><svg width="12" height="12" viewBox="0 0 12 12" fill="none" stroke-linecap="round" stroke-linejoin="round" ><path d="M1.400 2.400h3.200l1 1.200h5v6.800H1.400z" fill="#f5d3a0" stroke="#e8b974" stroke-width=".8"/><path d="M2.400 9.400l2.200-2.400 1.600 1.400 1.400-1.200 2 2.200z" fill="#fff"/><circle cx="4" cy="5.600" r=".8" fill="#fff"/></svg></div>
<div class="t" style="left:0;top:129.20px;width:25px;text-align:center;font-size:8.100px;color:#111;font-weight:700">图库</div>
<div class="sbi" style="left:5.2px;top:144.0px;width:14.2px;height:13.6px;"></div>
<div class="ic" style="left:6.500px;top:144.70px;width:12px;height:12px"><svg width="12" height="12" viewBox="0 0 12 12" fill="none" stroke-linecap="round" stroke-linejoin="round" ><rect x="2.600" y="2.600" width="6.800" height="6.800" fill="#5aa8f0"/><path d="M2.600 6l3.400-3.400M2.600 9.400l6.800-6.800M6 9.400l3.400-3.400" stroke="#9ccbf6" stroke-width=".7"/><path d="M1.200 1.200l1.600 1.600M10.800 1.200l-1.600 1.600M1.200 10.800l1.600-1.600M10.800 10.800l-1.600-1.600" stroke="#6e6e6e" stroke-width=".9"/><path d="M2.600 2.600h6.800v6.800H2.600z" stroke="#6e6e6e" stroke-width=".8" stroke-dasharray="1.500 .8"/></svg></div>
<div class="t" style="left:0;top:161.80px;width:25px;text-align:center;font-size:8.100px;color:#111;font-weight:700">填充</div>
<div class="sbi" style="left:5.2px;top:176.60000000000002px;width:14.2px;height:13.6px;"></div>
<div class="ic" style="left:6.500px;top:177.30px;width:12px;height:12px"><svg width="12" height="12" viewBox="0 0 12 12" fill="none" stroke-linecap="round" stroke-linejoin="round" ><path d="M9.800 4.400A4.200 4.200 0 002.400 3.600M2.200 7.600a4.200 4.200 0 007.400.8" stroke="#2e8ae6" stroke-width="1"/><path d="M2 1.600v2.400h2.400M10 10.400V8H7.600" stroke="#6e6e6e" stroke-width="1"/></svg></div>
<div class="t" style="left:0;top:194.40px;width:25px;text-align:center;font-size:8.100px;color:#111;font-weight:700">转换</div>
<div class="sbi" style="left:5.2px;top:209.2px;width:14.2px;height:13.6px;"></div>
<div class="ic" style="left:6.500px;top:209.90px;width:12px;height:12px"><svg width="12" height="12" viewBox="0 0 12 12" fill="none" stroke-linecap="round" stroke-linejoin="round" ><path d="M1.400 6L6 1.800 10.600 6M2.800 5v5.400h6.400V5" stroke="#6e6e6e" stroke-width="1"/><path d="M5 10.400V7.400h2v3" stroke="#2e8ae6" stroke-width="1"/></svg></div>
<div class="t" style="left:0;top:227.00px;width:25px;text-align:center;font-size:8.100px;color:#111;font-weight:700">家装</div>
<div class="sbi" style="left:5.2px;top:241.8px;width:14.2px;height:13.6px;"></div>
<div class="ic" style="left:6.500px;top:242.50px;width:12px;height:12px"><svg width="12" height="12" viewBox="0 0 12 12" fill="none" stroke-linecap="round" stroke-linejoin="round" ><circle cx="6" cy="6" r="4.600" stroke="#6e6e6e" stroke-width="1"/><path d="M6.600 2.600L4.200 6.400h1.800l-.6 3 2.400-3.800H6z" fill="#2e8ae6"/></svg></div>
<div class="t" style="left:0;top:259.60px;width:25px;text-align:center;font-size:8.100px;color:#111;font-weight:700">弱电</div>
<div class="sbi" style="left:5.2px;top:274.40000000000003px;width:14.2px;height:13.6px;"></div>
<div class="ic" style="left:6.500px;top:275.10px;width:12px;height:12px"><svg width="12" height="12" viewBox="0 0 12 12" fill="none" stroke-linecap="round" stroke-linejoin="round" ><path d="M6 1.400L3.600 4.600h1L2.400 8h7.200L7.400 4.600h1z" stroke="#6e6e6e" stroke-width="1"/><path d="M6 8v2.800" stroke="#2e8ae6" stroke-width="1.200"/></svg></div>
<div class="t" style="left:0;top:292.20px;width:25px;text-align:center;font-size:8.100px;color:#111;font-weight:700">园林</div>
<div class="sbi" style="left:5.2px;top:307.0px;width:14.2px;height:13.6px;"></div>
<div class="ic" style="left:6.500px;top:307.70px;width:12px;height:12px"><svg width="12" height="12" viewBox="0 0 12 12" fill="none" stroke-linecap="round" stroke-linejoin="round" ><path d="M1.800 3l2.800 6.800c.4.800 1.200.8 1.600 0L9.800 2" stroke="#2e8ae6" stroke-width="1.300"/><path d="M4.200 2l2.400 6" stroke="#6e6e6e" stroke-width="1"/></svg></div>
<div class="t" style="left:0;top:324.80px;width:25px;text-align:center;font-size:8.100px;color:#111;font-weight:700">工具</div>
<div class="sbi" style="left:5.2px;top:339.6px;width:14.2px;height:13.6px;"></div>
<div class="ic" style="left:6.500px;top:340.30px;width:12px;height:12px"><svg width="12" height="12" viewBox="0 0 12 12" fill="none" stroke-linecap="round" stroke-linejoin="round" ><rect x="1.400" y="2.800" width="9.200" height="6.800" rx=".8" stroke="#6e6e6e" stroke-width="1"/><path d="M1.800 3.400L6 6.800l4.200-3.400" stroke="#2e8ae6" stroke-width="1"/></svg></div>
<div class="t" style="left:0;top:357.40px;width:25px;text-align:center;font-size:8.100px;color:#111;font-weight:700">反馈</div>
<div style="left:26.8px;top:455.6px;width:841px;height:12px;background:#f0f0f0"></div>
<div style="left:0px;top:467px;width:867px;height:2px;background:linear-gradient(#9cc6ec,#5b9fe0)"></div>
<div style="left:0px;top:469px;width:867px;height:23px;background:#f0f0f0"></div>
<div style="left:28.0px;top:456.6px;width:10.2px;height:10.4px;border:1px solid #cfcfcf;background:#f7f7f7"></div>
<div style="left:28.0px;top:456.800px;width:10px;height:10px"><svg width="10" height="10" viewBox="0 0 10 10"><path d="M2.800 2.400v5.200" stroke="#555" stroke-width=".9"/><path d="M7.400 2.400L4 5l3.400 2.600z" fill="none" stroke="#555" stroke-width=".8"/></svg></div>
<div style="left:38.5px;top:456.6px;width:10.2px;height:10.4px;border:1px solid #cfcfcf;background:#f7f7f7"></div>
<div style="left:38.5px;top:456.800px;width:10px;height:10px"><svg width="10" height="10" viewBox="0 0 10 10"><path d="M6.600 2.200L3 5l3.600 2.800z" fill="#555"/></svg></div>
<div style="left:49.0px;top:456.6px;width:10.2px;height:10.4px;border:1px solid #cfcfcf;background:#f7f7f7"></div>
<div style="left:49.0px;top:456.800px;width:10px;height:10px"><svg width="10" height="10" viewBox="0 0 10 10"><path d="M3.400 2.200L7 5 3.400 7.800z" fill="#555"/></svg></div>
<div style="left:59.5px;top:456.6px;width:10.2px;height:10.4px;border:1px solid #cfcfcf;background:#f7f7f7"></div>
<div style="left:59.5px;top:456.800px;width:10px;height:10px"><svg width="10" height="10" viewBox="0 0 10 10"><path d="M7.200 2.400v5.200" stroke="#555" stroke-width=".9"/><path d="M2.600 2.400L6 5 2.600 7.600z" fill="none" stroke="#555" stroke-width=".8"/></svg></div>
<div style="left:70.6px;top:456.4px;width:43.4px;height:11px;background:#dcdcdc;border:1px solid #c8c8c8"></div>
<div class="t" style="left:70.6px;top:456.9px;width:43.400px;text-align:center;font-size:8.100px;color:#2e86e0">模型</div>
<div style="left:114.4px;top:456.4px;width:44px;height:11px;background:#f7f7f7;border:1px solid #c8c8c8"></div>
<div class="t" style="left:114.4px;top:456.9px;width:44px;text-align:center;font-size:8.300px;color:#222">Layout1</div>
<div style="left:158.8px;top:456.4px;width:44px;height:11px;background:#f7f7f7;border:1px solid #c8c8c8"></div>
<div class="t" style="left:158.8px;top:456.9px;width:44px;text-align:center;font-size:8.300px;color:#222">Layout2</div>
<div style="left:203.2px;top:456.4px;width:11px;height:11px;background:#f7f7f7;border:1px solid #c8c8c8"></div>
<div style="left:205.200px;top:458.400px;width:7px;height:7px"><svg width="7" height="7" viewBox="0 0 7 7"><path d="M3.500.500v6M.500 3.500h6" stroke="#333" stroke-width="1"/></svg></div>
<div style="left:4.600px;top:470.400px;width:15px;height:12px"><svg width="15" height="12" viewBox="0 0 15 12"><rect x=".5" y="1" width="12.500" height="10.500" rx="1.500" fill="#e33a2c"/><path d="M.500 8l6-6.500H13v5L8 11.500H2a1.500 1.500 0 01-1.500-1.500z" fill="#f6c21c"/><path d="M3 9.500L9.500 2.500l2 1.600L5.400 10.600z" fill="#fff"/><path d="M.500 9.500c3 2 8 2 12.500 0V10a1.500 1.500 0 01-1.500 1.500H2A1.500 1.500 0 01.500 10z" fill="#4a9a2a"/></svg></div>
<div class="t" style="left:21.3px;top:471px;font-size:8.100px;color:#555">CAD迷你画图</div>
<div style="left:78.3px;top:470.4px;width:57px;height:12.2px;background:#d9d9d9;border-radius:1px"></div>
<div class="t" style="left:78.3px;top:471.4px;width:57px;text-align:center;font-size:8.100px;color:#111;font-weight:500;-webkit-text-stroke:.2px #111">功能命令表</div>
<div style="left:141.5px;top:471px;width:169px;height:11.4px;background:#f4f4f4;border:1px solid #cdcdcd"></div>
<div class="t" style="left:144px;top:471.6px;font-size:7.900px;color:#9a9a9a">输入功能或命令关键词, 快速查找功能</div>
<div style="left:310.5px;top:471px;width:49.5px;height:11.4px;background:#d9d9d9"></div>
<div class="t" style="left:310.5px;top:471.6px;width:49.500px;text-align:center;font-size:8.100px;color:#111;font-weight:500;-webkit-text-stroke:.2px #111">确定</div>
<div style="left:593.5px;top:471px;width:80px;height:11.4px;background:#f4f4f4;border:1px solid #cdcdcd"></div>
<div class="t" style="left:596px;top:471.6px;font-size:7.900px;color:#8a8a8a">查找文字</div>
<div style="left:673.5px;top:471px;width:16.5px;height:11.4px;background:#d9d9d9"></div>
<div style="left:677px;top:472.200px;width:9px;height:9px"><svg width="9" height="9" viewBox="0 0 9 9" fill="none"><circle cx="3.600" cy="3.600" r="2.600" stroke="#555" stroke-width=".9"/><path d="M5.600 5.600l2.600 2.600" stroke="#555" stroke-width="1.200"/></svg></div>
<div style="left:694.6px;top:470.4px;width:14.8px;height:12.4px;background:#c9ddf2"></div>
<div style="left:696px;top:470.600px;width:12px;height:12px"><svg width="12" height="12" viewBox="0 0 12 12" fill="none" stroke-linecap="round" stroke-linejoin="round"><path d="M3 8.500l3-2.500M6.500 6L4.500 2.500M7 6l2.500-3.500" stroke="#2e8ae6" stroke-width=".8"/><circle cx="2.800" cy="8.800" r="1.300" fill="#2e8ae6"/><circle cx="6.600" cy="6" r="1.400" fill="#2e8ae6"/><circle cx="4.400" cy="2.300" r="1.200" fill="#2e8ae6"/><circle cx="9.600" cy="2.600" r="1.200" stroke="#2e8ae6" stroke-width=".8"/><circle cx="7.200" cy="9.800" r="1.200" fill="#2e8ae6"/></svg></div>
<div style="left:714px;top:470.600px;width:12px;height:12px"><svg width="12" height="12" viewBox="0 0 12 12" fill="none" stroke-linecap="round" stroke-linejoin="round"><path d="M1.600 2.600h8.800M1.600 4.900h8.800M1.600 7.200h8.800M1.600 9.500h8.800M2.600 1.600v8.800M4.900 1.600v8.800M7.200 1.600v8.800M9.500 1.600v8.800" stroke="#1c1c1c" stroke-width=".85" stroke-linecap="butt"/></svg></div>
<div style="left:732.5px;top:470.600px;width:12px;height:12px"><svg width="12" height="12" viewBox="0 0 12 12" fill="none" stroke-linecap="round" stroke-linejoin="round"><path d="M2.600 1.900v8.600M4.900 1.900v8.600M7.200 1.900v8.600M9.500 1.900v8.600" stroke="#1c1c1c" stroke-width="1.400" stroke-dasharray="1.400 1" stroke-linecap="butt"/></svg></div>
<div style="left:748.6px;top:470.4px;width:14.8px;height:12.4px;background:#c9ddf2"></div>
<div style="left:750px;top:470.600px;width:12px;height:12px"><svg width="12" height="12" viewBox="0 0 12 12" fill="none" stroke-linecap="round" stroke-linejoin="round"><path d="M4.200 5V1.800l3 3.200V1.800" stroke="#2e8ae6" stroke-width=".9"/><path d="M1.500 8.500h9M3.200 7.200L1.500 8.500l1.700 1.300M8.800 7.200l1.700 1.300-1.700 1.300" stroke="#2e8ae6" stroke-width=".8"/><path d="M5 7.600l2 1.800M7 7.600L5 9.400" stroke="#2e8ae6" stroke-width=".7"/></svg></div>
<div style="left:768px;top:470.600px;width:12px;height:12px"><svg width="12" height="12" viewBox="0 0 12 12" fill="none" stroke-linecap="round" stroke-linejoin="round"><path d="M2.500 1.500v9h8" stroke="#333" stroke-width="1.100"/><path d="M2.500 7h3.500v3.500" stroke="#333" stroke-width=".8"/></svg></div>
<div style="left:786.1px;top:470.4px;width:14.8px;height:12.4px;background:#c9ddf2"></div>
<div style="left:787.5px;top:470.600px;width:12px;height:12px"><svg width="12" height="12" viewBox="0 0 12 12" fill="none" stroke-linecap="round" stroke-linejoin="round"><rect x="2" y="2" width="8.500" height="8.500" fill="#2e8ae6" stroke="#2b6fb8" stroke-width=".8"/><path d="M3.500 3.500l4 4M7.500 4.600v2.900H4.600" stroke="#fff" stroke-width=".9"/></svg></div>
<div style="left:805px;top:470.600px;width:12px;height:12px"><svg width="12" height="12" viewBox="0 0 12 12" fill="none" stroke-linecap="round" stroke-linejoin="round"><path d="M6 1.500v9M1.500 6h9" stroke="#222" stroke-width="1.200"/></svg></div>
<div style="left:823.800px;top:471.400px;width:10.400px;height:10.400px;border-radius:50%;background:conic-gradient(#f2d04a,#8fd05a,#49c2d8,#5a86e8,#a35fe0,#ee5f9f,#f2894a,#f2d04a);border:.600px solid #777"></div>
<div style="left:842px;top:470.600px;width:12px;height:12px"><svg width="12" height="12" viewBox="0 0 12 12" fill="none"><ellipse cx="6" cy="6" rx="5.400" ry="2.500" transform="rotate(-28 6 6)" stroke="#2e2e2e" stroke-width="1.100"/><path d="M3 5.400l3.400-2.200 2.800 2.400-3.400 2.400z" stroke="#2e2e2e" stroke-width="1" fill="#f6f6f6"/></svg></div>
<div style="left:26px;top:64px;width:113px;height:147px;background:#fff;border:1px solid #4b97dc"></div>
<div style="left:27px;top:65px;width:111px;height:17px;background:#f0f1f3"></div>
<div class="t" style="left:34.2px;top:68.2px;font-size:7.400px;color:#222">标注设置</div>
<div style="left:126px;top:69.400px;width:7px;height:7px"><svg width="7" height="7" viewBox="0 0 7 7"><path d="M.500.500l6 6M6.500.500l-6 6" stroke="#666" stroke-width=".8"/></svg></div>
<div class="t" style="left:33.7px;top:91.89999999999999px;font-size:7.500px;color:#5c5c5c">标注精度<span style="margin-left:1.200px">:</span></div>
<div class="btn" style="left:69.2px;top:89.3px;width:15px;height:14.2px;"></div>
<div class="btn" style="left:118.2px;top:89.3px;width:14.4px;height:14.2px;"></div>
<div style="left:84.2px;top:89.3px;width:34px;height:14.2px;background:#ececec;border-top:1px solid #e0e0e0;border-bottom:1px solid #e0e0e0"></div>
<div class="t" style="left:86.8px;top:91.7px;font-size:7.600px;color:#aaa">0.00</div>
<div style="left:70.600px;top:90.5px;width:12px;height:12px"><svg width="12" height="12" viewBox="0 0 12 12" fill="none" stroke="#222" stroke-width=".8"><path d="M1.200 3h3.600M2.600 1.800L1.200 3l1.400 1.200"/><circle cx="6.200" cy="4.600" r=".3" fill="#222"/><ellipse cx="8.600" cy="3" rx="1.200" ry="1.800"/><circle cx="2.400" cy="10.200" r=".3" fill="#222"/><ellipse cx="4.800" cy="8.800" rx="1.200" ry="1.800"/><ellipse cx="8.600" cy="8.800" rx="1.200" ry="1.800"/></svg></div>
<div style="left:119.400px;top:90.5px;width:12px;height:12px"><svg width="12" height="12" viewBox="0 0 12 12" fill="none" stroke="#222" stroke-width=".8"><circle cx="2.400" cy="4.600" r=".3" fill="#222"/><ellipse cx="4.800" cy="3" rx="1.200" ry="1.800"/><ellipse cx="8.600" cy="3" rx="1.200" ry="1.800"/><path d="M1.200 8.800h3.600M3.400 7.600l1.400 1.200-1.400 1.200"/><circle cx="6.200" cy="10.200" r=".3" fill="#222"/><ellipse cx="8.600" cy="8.800" rx="1.200" ry="1.800"/></svg></div>
<div class="t" style="left:33.7px;top:112.19999999999999px;font-size:7.500px;color:#5c5c5c">文字大小<span style="margin-left:1.200px">:</span></div>
<div class="btn" style="left:69.2px;top:109.6px;width:15px;height:14.2px;"></div>
<div class="btn" style="left:118.2px;top:109.6px;width:14.4px;height:14.2px;"></div>
<div style="left:84.2px;top:109.6px;width:34px;height:14.2px;background:#fff;border-top:1px solid #e4e4e4;border-bottom:1px solid #bdbdbd"></div>
<div class="t" style="left:86.6px;top:112.0px;font-size:7.400px;color:#111">1684.41</div>
<div style="left:74.2px;top:116.0px;width:5px;height:1.6px;background:#1a1a1a"></div>
<div style="left:122.6px;top:116.0px;width:5.6px;height:1.6px;background:#1a1a1a"></div>
<div style="left:124.6px;top:114.0px;width:1.6px;height:5.6px;background:#1a1a1a"></div>
<div class="t" style="left:33.7px;top:132.6px;font-size:7.500px;color:#5c5c5c">箭头大小<span style="margin-left:1.200px">:</span></div>
<div class="btn" style="left:69.2px;top:130px;width:15px;height:14.2px;"></div>
<div class="btn" style="left:118.2px;top:130px;width:14.4px;height:14.2px;"></div>
<div style="left:84.2px;top:130px;width:34px;height:14.2px;background:#fff;border-top:1px solid #e4e4e4;border-bottom:1px solid #bdbdbd"></div>
<div class="t" style="left:86.6px;top:132.4px;font-size:7.400px;color:#111">1443.78</div>
<div style="left:74.2px;top:136.4px;width:5px;height:1.6px;background:#1a1a1a"></div>
<div style="left:122.6px;top:136.4px;width:5.6px;height:1.6px;background:#1a1a1a"></div>
<div style="left:124.6px;top:134.4px;width:1.6px;height:5.6px;background:#1a1a1a"></div>
<div style="left:47px;top:150px;width:71.6px;height:14.3px;background:#d2d2d2;border:1px solid #c4c4c4;border-radius:1.500px"></div>
<div style="left:60.500px;top:153.500px;width:7px;height:7px"><svg width="7" height="7" viewBox="0 0 7 7"><path d="M.800 3.600l2 2L6.200 1.200" stroke="#2e86e0" stroke-width="1.100" fill="none"/></svg></div>
<div class="t" style="left:68.6px;top:152.4px;font-size:7.500px;color:#222">自动设置</div>
<div class="btn" style="left:47px;top:170px;width:71.6px;height:14.3px;"></div>
<div class="t" style="left:47px;top:172.4px;width:71.600px;text-align:center;font-size:7.500px;color:#222">修改全图标注</div>
<div class="btn" style="left:47px;top:190.6px;width:71.6px;height:14.3px;"></div>
<div class="t" style="left:47px;top:193px;width:71.600px;text-align:center;font-size:7.500px;color:#222">更多设置</div>
<div style="left:370.8px;top:58.8px;width:54.8px;height:268.2px;background:#f6f6f6;border-bottom:1px solid #cfcfcf"></div>
<div class="mi" style="left:370.8px;top:59.30px;width:54.800px;background:#cfe5f8;"><div class="ic" style="left:2.300px;top:1.300px;width:13.600px;height:13.600px"><svg width="13.6" height="13.6" viewBox="0 0 12 12" fill="none" stroke-linecap="round" stroke-linejoin="round" ><path d="M1.600 1.400v9.200M10.400 1.400v9.200M1.600 6h8.800" stroke="#2e8ae6" stroke-width="1"/></svg></div><div class="t">线性标注</div></div>
<div class="mi" style="left:370.8px;top:75.44px;width:54.800px;"><div class="ic" style="left:2.300px;top:1.300px;width:13.600px;height:13.600px"><svg width="13.6" height="13.6" viewBox="0 0 12 12" fill="none" stroke-linecap="round" stroke-linejoin="round" ><path d="M2 10.400C2 6 5.600 2.400 10 2.400" stroke="#6e6e6e" stroke-width="1"/><path d="M4.400 10.400c0-3.200 2.400-5.600 5.600-5.600" stroke="#2e8ae6" stroke-width=".8" stroke-dasharray="1.200 1"/><circle cx="2" cy="10.400" r=".9" fill="#2e8ae6"/><circle cx="10" cy="2.400" r=".9" fill="#2e8ae6"/></svg></div><div class="t">弧长标注</div></div>
<div class="mi" style="left:370.8px;top:91.58px;width:54.800px;"><div class="ic" style="left:2.300px;top:1.300px;width:13.600px;height:13.600px"><svg width="13.6" height="13.6" viewBox="0 0 12 12" fill="none" stroke-linecap="round" stroke-linejoin="round" ><circle cx="6" cy="6" r="4.600" stroke="#6e6e6e" stroke-width="1"/><path d="M2.800 2.800l6.400 6.400" stroke="#2e8ae6" stroke-width="1"/></svg></div><div class="t">直径标注</div></div>
<div class="mi" style="left:370.8px;top:107.72px;width:54.800px;"><div class="ic" style="left:2.300px;top:1.300px;width:13.600px;height:13.600px"><svg width="13.6" height="13.6" viewBox="0 0 12 12" fill="none" stroke-linecap="round" stroke-linejoin="round" ><path d="M1.800 6.400A4.400 4.400 0 0110.400 5" stroke="#6e6e6e" stroke-width="1"/><path d="M8.600 3.200L6.600 6l1.800.4-2 4" stroke="#2e8ae6" stroke-width=".9"/><path d="M5.800 11l.4-1.800 1.200.8z" fill="#2e8ae6"/></svg></div><div class="t">折弯标注</div></div>
<div style="left:371.8px;top:124.46px;width:52.8px;height:1px;background:#d7d7d7"></div>
<div class="mi" style="left:370.8px;top:126.16px;width:54.800px;"><div class="ic" style="left:2.300px;top:1.300px;width:13.600px;height:13.600px"><svg width="13.6" height="13.6" viewBox="0 0 12 12" fill="none" stroke-linecap="round" stroke-linejoin="round" ><path d="M1.200 6.400h9.600M3.600 6.400L6 9l2.400-2.600M2.400 10.800h7.200" stroke="#6e6e6e" stroke-width=".9"/><path d="M2.400 5V2.200M4 2.600c0-.6 1.400-.6 1.400.6S4 4.400 4 3.800zM7 2.600c0-.6 1.400-.6 1.400.6S7 4.400 7 3.800z" stroke="#2e8ae6" stroke-width=".7"/></svg></div><div class="t">标高标注</div></div>
<div style="left:371.8px;top:142.9px;width:52.8px;height:1px;background:#d7d7d7"></div>
<div class="mi" style="left:370.8px;top:144.60px;width:54.800px;"><div class="ic" style="left:2.300px;top:1.300px;width:13.600px;height:13.600px"><svg width="13.6" height="13.6" viewBox="0 0 12 12" fill="none" stroke-linecap="round" stroke-linejoin="round" ><path d="M2.400 9.400h8" stroke="#6e6e6e" stroke-width="1"/><path d="M1 9.400l2.200-1.200v2.400z" fill="#2e8ae6"/><path d="M5.600 7L7.400 2.400 9.200 7M6.200 5.600h2.400" stroke="#2e8ae6" stroke-width=".9"/></svg></div><div class="t">箭头引注</div></div>
<div class="mi" style="left:370.8px;top:160.74px;width:54.800px;"><div class="ic" style="left:2.300px;top:1.300px;width:13.600px;height:13.600px"><svg width="13.6" height="13.6" viewBox="0 0 12 12" fill="none" stroke-linecap="round" stroke-linejoin="round" ><path d="M1.800 10l4-5.600M4 10.400h6.800M6 4.400h2" stroke="#6e6e6e" stroke-width="1"/><path d="M6.400 9L8.200 3 10 9M7 7.200h2.400" stroke="#2e8ae6" stroke-width=".9"/><circle cx="1.800" cy="10" r=".9" fill="#2e8ae6"/></svg></div><div class="t">引出标注</div></div>
<div class="mi" style="left:370.8px;top:176.88px;width:54.800px;"><div class="ic" style="left:2.300px;top:1.300px;width:13.600px;height:13.600px"><svg width="13.6" height="13.6" viewBox="0 0 12 12" fill="none" stroke-linecap="round" stroke-linejoin="round" ><path d="M2 1.600v9" stroke="#6e6e6e" stroke-width="1.100"/><path d="M2 3h8.800M2 5.600h8.800M2 8.200h8.800" stroke="#2e8ae6" stroke-width="1.500"/></svg></div><div class="t">做法标注</div></div>
<div class="mi" style="left:370.8px;top:193.02px;width:54.800px;"><div class="ic" style="left:2.300px;top:1.300px;width:13.600px;height:13.600px"><svg width="13.6" height="13.6" viewBox="0 0 12 12" fill="none" stroke-linecap="round" stroke-linejoin="round" ><path d="M1.600 1.600v6.800h5.600" stroke="#2e8ae6" stroke-width="1.100"/><circle cx="8.800" cy="8.400" r="1.700" stroke="#2e8ae6" stroke-width="1"/></svg></div><div class="t">索引符号</div></div>
<div style="left:371.8px;top:209.75999999999996px;width:52.8px;height:1px;background:#d7d7d7"></div>
<div class="mi" style="left:370.8px;top:211.46px;width:54.800px;"><div class="ic" style="left:2.300px;top:1.300px;width:13.600px;height:13.600px"><svg width="13.6" height="13.6" viewBox="0 0 12 12" fill="none" stroke-linecap="round" stroke-linejoin="round" ><path d="M1 6h10" stroke="#2e8ae6" stroke-width=".9" stroke-dasharray="2.600 1.200"/><path d="M3 3.600V2.200h6v1.400M3 8.400v1.400h6V8.400" stroke="#6e6e6e" stroke-width="1"/></svg></div><div class="t">剖切符号</div></div>
<div class="mi" style="left:370.8px;top:227.60px;width:54.800px;"><div class="ic" style="left:2.300px;top:1.300px;width:13.600px;height:13.600px"><svg width="13.6" height="13.6" viewBox="0 0 12 12" fill="none" stroke-linecap="round" stroke-linejoin="round" ><circle cx="6" cy="6" r="4.600" stroke="#2e8ae6" stroke-width="1.100"/><path d="M1.400 6h9.200M6 1.400v2.200M6 8.400v2.200" stroke="#2e8ae6" stroke-width="1"/></svg></div><div class="t">索引图名</div></div>
<div class="mi" style="left:370.8px;top:243.74px;width:54.800px;"><div class="ic" style="left:2.300px;top:1.300px;width:13.600px;height:13.600px"><svg width="13.6" height="13.6" viewBox="0 0 12 12" fill="none" stroke-linecap="round" stroke-linejoin="round" ><path d="M2 1.600h5.200v2.200M7.200 8.200v2.200H2z" stroke="#6e6e6e" stroke-width="1.100" fill="#d9e9f8"/><path d="M2 1.600v8.800" stroke="#6e6e6e" stroke-width="1.100"/><path d="M5 6h5.400M8.600 4.200L10.600 6l-2 1.800" stroke="#2e8ae6" stroke-width="1.100"/></svg></div><div class="t">加折断线</div></div>
<div class="mi" style="left:370.8px;top:259.88px;width:54.800px;"><div class="ic" style="left:2.300px;top:1.300px;width:13.600px;height:13.600px"><svg width="13.6" height="13.6" viewBox="0 0 12 12" fill="none" stroke-linecap="round" stroke-linejoin="round" ><path d="M2.400 3.200c.6-1.600 2.400-1.400 2.800-.4.600-1.200 2.600-1.200 3 0 1.400-.4 2.200 1.400 1.200 2.200 1 .800.8 2.400-.4 2.800.2 1.400-1.800 2-2.600 1-.6 1-2.400 1-3-.2-1.400.4-2.400-1.200-1.600-2.200-1.200-.800-.8-2.800.6-3.200z" stroke="#6e6e6e" stroke-width=".9" stroke-dasharray="1.400 .8"/></svg></div><div class="t">绘制云线</div></div>
<div style="left:371.8px;top:276.61999999999995px;width:52.8px;height:1px;background:#d7d7d7"></div>
<div class="mi" style="left:370.8px;top:278.32px;width:54.800px;"><div class="ic" style="left:2.300px;top:1.300px;width:13.600px;height:13.600px"><svg width="13.6" height="13.6" viewBox="0 0 12 12" fill="none" stroke-linecap="round" stroke-linejoin="round" ><path d="M1 8.200L2.400 4.600 3.800 8.200M1.400 7.200h2M4.600 8.200V4.600h1c1.200 0 1.200 1.700 0 1.700 1.400 0 1.400 1.900 0 1.900z" stroke="#6e6e6e" stroke-width=".7"/><path d="M8 6.400h3" stroke="#2e8ae6" stroke-width="1.300"/></svg></div><div class="t">图名标注</div></div>
<div class="mi" style="left:370.8px;top:294.46px;width:54.800px;"><div class="ic" style="left:2.300px;top:1.300px;width:13.600px;height:13.600px"><svg width="13.6" height="13.6" viewBox="0 0 12 12" fill="none" stroke-linecap="round" stroke-linejoin="round" ><path d="M6 2v8" stroke="#2e8ae6" stroke-width="1.100"/><path d="M3.800 2.200h4.400M3.800 9.800h4.400" stroke="#2e8ae6" stroke-width="1.100"/><path d="M4.800 3.600h2.400M4.800 8.400h2.400" stroke="#2e8ae6" stroke-width=".9"/></svg></div><div class="t">画对称轴</div></div>
<div class="mi" style="left:370.8px;top:310.60px;width:54.800px;"><div class="ic" style="left:2.300px;top:1.300px;width:13.600px;height:13.600px"><svg width="13.6" height="13.6" viewBox="0 0 12 12" fill="none" stroke-linecap="round" stroke-linejoin="round" ><circle cx="6" cy="6" r="4.800" stroke="#6e6e6e" stroke-width=".9"/><path d="M6 1.400L4 9.600h4z" fill="#2e8ae6"/></svg></div><div class="t">画指北针</div></div>
<div style="left:662.4px;top:59.8px;width:47.6px;height:15.4px;background:#cde5f7;border:1px solid #e4f0fa"></div>
<div style="left:665.500px;top:62.600px;width:10px;height:10px"><svg width="10" height="10" viewBox="0 0 10 10" fill="none"><rect x="1" y="1" width="8" height="8" stroke="#5a6b78" stroke-width=".9"/><path d="M1 3.600h8M1 6.200h8M4 3.600V9" stroke="#5a6b78" stroke-width=".8"/><rect x="1" y="1" width="8" height="2.600" fill="#7aa6cc"/></svg></div>
<div class="t" style="left:679.6px;top:63.2px;font-size:6.800px;color:#222;line-height:9px">测量记录</div>
<div style="left:368.3px;top:22px;width:74.6px;height:308.6px;border:3.200px solid #e8261d"></div>
<div style="left:659px;top:22px;width:23.4px;height:39.2px;border:3px solid #e8261d"></div>
<div style="left:680.4px;top:22px;width:21.8px;height:20.2px;border:3px solid #e8261d"></div>
<div style="left:626.2px;top:221.6px;width:241px;height:235.8px;background:#fff;border:1px solid #b5d6f2;border-right:none"></div>
<div style="left:627.2px;top:222.6px;width:240px;height:16.4px;background:#f0f1f3"></div>
<div class="t" style="left:634px;top:226.2px;font-size:6.900px;color:#222;line-height:9px">测量记录</div>
<div style="left:849px;top:228.200px;width:7px;height:7px"><svg width="7" height="7" viewBox="0 0 7 7"><path d="M.500.500l6 6M6.500.500l-6 6" stroke="#555" stroke-width=".8"/></svg></div>
<div style="left:630.3px;top:245.2px;width:119.2px;height:11.8px;background:#fff;border:1px solid #a8a8a8;border-radius:1px"></div>
<div class="t" style="left:631.8px;top:246.8px;font-size:6.900px;color:#222;line-height:9px">新项目1</div>
<div style="left:740.800px;top:247.600px;width:7px;height:7px"><svg width="7" height="7" viewBox="0 0 7 7"><path d="M.600.600l5.800 5.800M6.400.600L.600 6.400" stroke="#444" stroke-width=".8"/></svg></div>
<div style="left:760.6px;top:244.4px;width:30.4px;height:13.4px;background:#f0f1f3;border-radius:1.500px"></div>
<div style="left:763.8000000000001px;top:247px;width:8px;height:8px"><svg width="8" height="8" viewBox="0 0 8 8" fill="none"><path d="M1.600 2.800l.4 4.800h4l.4-4.800zM1 2.400h6M3 2.200V1.200h2v1" stroke="#2e86e0" stroke-width=".9" fill="#2e86e0"/></svg></div>
<div class="t" style="left:775.2px;top:246.8px;font-size:6.900px;color:#222;line-height:9px">清空</div>
<div style="left:792.8px;top:244.4px;width:30.4px;height:13.4px;background:#f0f1f3;border-radius:1.500px"></div>
<div style="left:796.0px;top:247px;width:8px;height:8px"><svg width="8" height="8" viewBox="0 0 8 8" fill="none"><path d="M4 1v6M1 4h6" stroke="#2e86e0" stroke-width="1.200"/></svg></div>
<div class="t" style="left:807.4px;top:246.8px;font-size:6.900px;color:#222;line-height:9px">添加</div>
<div style="left:826px;top:244.4px;width:30.4px;height:13.4px;background:#f0f1f3;border-radius:1.500px"></div>
<div style="left:829.2px;top:247px;width:8px;height:8px"><svg width="8" height="8" viewBox="0 0 8 8" fill="none"><rect x="1.200" y="1.200" width="5.600" height="5.600" rx=".8" stroke="#2e86e0" stroke-width="1" fill="#cfe4f8"/><path d="M2.800 4h2.400" stroke="#2e86e0" stroke-width=".8"/></svg></div>
<div class="t" style="left:840.6px;top:246.8px;font-size:6.900px;color:#222;line-height:9px">导出</div>
<div style="left:631.2px;top:263.4px;width:225.8px;height:188.8px;background:#fff;border:1px solid #b2b2b2;overflow:hidden"></div>
<div style="left:651.4000000000001px;top:264.4px;width:50.2px;height:13.8px;background:#fff;border-left:1px solid #e4e4e4;border-right:1px solid #e4e4e4"></div>
<div class="t" style="left:654.2px;top:267.4px;font-size:6.900px;color:#222;line-height:9px">新项目1</div>
<div style="left:651.4000000000001px;top:278.2px;width:50.2px;height:173px;background:#c7dff6"></div>
<div style="left:632.2px;top:288.9px;width:213.8px;height:1px;background:rgba(255,255,255,.55)"></div>
<div style="left:701.6px;top:288.9px;width:144.4px;height:1px;background:#f0f0f0"></div>
<div style="left:632.2px;top:288.9px;width:19.2px;height:1px;background:#f0f0f0"></div>
<div class="rn" style="left:635.8000000000001px;top:279.60px">1</div>
<div style="left:632.2px;top:300.10999999999996px;width:213.8px;height:1px;background:rgba(255,255,255,.55)"></div>
<div style="left:701.6px;top:300.10999999999996px;width:144.4px;height:1px;background:#f0f0f0"></div>
<div style="left:632.2px;top:300.10999999999996px;width:19.2px;height:1px;background:#f0f0f0"></div>
<div class="rn" style="left:635.8000000000001px;top:290.81px">2</div>
<div style="left:632.2px;top:311.32px;width:213.8px;height:1px;background:rgba(255,255,255,.55)"></div>
<div style="left:701.6px;top:311.32px;width:144.4px;height:1px;background:#f0f0f0"></div>
<div style="left:632.2px;top:311.32px;width:19.2px;height:1px;background:#f0f0f0"></div>
<div class="rn" style="left:635.8000000000001px;top:302.02px">3</div>
<div style="left:632.2px;top:322.53px;width:213.8px;height:1px;background:rgba(255,255,255,.55)"></div>
<div style="left:701.6px;top:322.53px;width:144.4px;height:1px;background:#f0f0f0"></div>
<div style="left:632.2px;top:322.53px;width:19.2px;height:1px;background:#f0f0f0"></div>
<div class="rn" style="left:635.8000000000001px;top:313.23px">4</div>
<div style="left:632.2px;top:333.73999999999995px;width:213.8px;height:1px;background:rgba(255,255,255,.55)"></div>
<div style="left:701.6px;top:333.73999999999995px;width:144.4px;height:1px;background:#f0f0f0"></div>
<div style="left:632.2px;top:333.73999999999995px;width:19.2px;height:1px;background:#f0f0f0"></div>
<div class="rn" style="left:635.8000000000001px;top:324.44px">5</div>
<div style="left:632.2px;top:344.95px;width:213.8px;height:1px;background:rgba(255,255,255,.55)"></div>
<div style="left:701.6px;top:344.95px;width:144.4px;height:1px;background:#f0f0f0"></div>
<div style="left:632.2px;top:344.95px;width:19.2px;height:1px;background:#f0f0f0"></div>
<div class="rn" style="left:635.8000000000001px;top:335.65px">6</div>
<div style="left:632.2px;top:356.15999999999997px;width:213.8px;height:1px;background:rgba(255,255,255,.55)"></div>
<div style="left:701.6px;top:356.15999999999997px;width:144.4px;height:1px;background:#f0f0f0"></div>
<div style="left:632.2px;top:356.15999999999997px;width:19.2px;height:1px;background:#f0f0f0"></div>
<div class="rn" style="left:635.8000000000001px;top:346.86px">7</div>
<div style="left:632.2px;top:367.36999999999995px;width:213.8px;height:1px;background:rgba(255,255,255,.55)"></div>
<div style="left:701.6px;top:367.36999999999995px;width:144.4px;height:1px;background:#f0f0f0"></div>
<div style="left:632.2px;top:367.36999999999995px;width:19.2px;height:1px;background:#f0f0f0"></div>
<div class="rn" style="left:635.8000000000001px;top:358.07px">8</div>
<div style="left:632.2px;top:378.58px;width:213.8px;height:1px;background:rgba(255,255,255,.55)"></div>
<div style="left:701.6px;top:378.58px;width:144.4px;height:1px;background:#f0f0f0"></div>
<div style="left:632.2px;top:378.58px;width:19.2px;height:1px;background:#f0f0f0"></div>
<div class="rn" style="left:635.8000000000001px;top:369.28px">9</div>
<div style="left:632.2px;top:389.79px;width:213.8px;height:1px;background:rgba(255,255,255,.55)"></div>
<div style="left:701.6px;top:389.79px;width:144.4px;height:1px;background:#f0f0f0"></div>
<div style="left:632.2px;top:389.79px;width:19.2px;height:1px;background:#f0f0f0"></div>
<div class="rn" style="left:635.8000000000001px;top:380.49px">10</div>
<div style="left:632.2px;top:401.0px;width:213.8px;height:1px;background:rgba(255,255,255,.55)"></div>
<div style="left:701.6px;top:401.0px;width:144.4px;height:1px;background:#f0f0f0"></div>
<div style="left:632.2px;top:401.0px;width:19.2px;height:1px;background:#f0f0f0"></div>
<div class="rn" style="left:635.8000000000001px;top:391.70px">11</div>
<div style="left:632.2px;top:412.21px;width:213.8px;height:1px;background:rgba(255,255,255,.55)"></div>
<div style="left:701.6px;top:412.21px;width:144.4px;height:1px;background:#f0f0f0"></div>
<div style="left:632.2px;top:412.21px;width:19.2px;height:1px;background:#f0f0f0"></div>
<div class="rn" style="left:635.8000000000001px;top:402.91px">12</div>
<div style="left:632.2px;top:423.42px;width:213.8px;height:1px;background:rgba(255,255,255,.55)"></div>
<div style="left:701.6px;top:423.42px;width:144.4px;height:1px;background:#f0f0f0"></div>
<div style="left:632.2px;top:423.42px;width:19.2px;height:1px;background:#f0f0f0"></div>
<div class="rn" style="left:635.8000000000001px;top:414.12px">13</div>
<div style="left:632.2px;top:434.63px;width:213.8px;height:1px;background:rgba(255,255,255,.55)"></div>
<div style="left:701.6px;top:434.63px;width:144.4px;height:1px;background:#f0f0f0"></div>
<div style="left:632.2px;top:434.63px;width:19.2px;height:1px;background:#f0f0f0"></div>
<div class="rn" style="left:635.8000000000001px;top:425.33px">14</div>
<div style="left:632.2px;top:445.84px;width:213.8px;height:1px;background:rgba(255,255,255,.55)"></div>
<div style="left:701.6px;top:445.84px;width:144.4px;height:1px;background:#f0f0f0"></div>
<div style="left:632.2px;top:445.84px;width:19.2px;height:1px;background:#f0f0f0"></div>
<div class="rn" style="left:635.8000000000001px;top:436.54px">15</div>
<div style="left:632.2px;top:457.05px;width:213.8px;height:1px;background:rgba(255,255,255,.55)"></div>
<div style="left:701.6px;top:457.05px;width:144.4px;height:1px;background:#f0f0f0"></div>
<div style="left:632.2px;top:457.05px;width:19.2px;height:1px;background:#f0f0f0"></div>
<div style="left:635.8000000000001px;top:447.75px;width:14px;height:3.45px;overflow:hidden"><div class="rn" style="left:0;top:0">16</div></div>
<div style="left:846.4px;top:264.4px;width:9.6px;height:186.8px;background:#ececec"></div>
<div style="left:849.9px;top:273.8px;width:1.5px;height:156.4px;background:#7d7d7d"></div>
<div style="left:626.2px;top:456.4px;width:241px;height:1.2px;background:#b5d6f2"></div>
</div></body></html>
